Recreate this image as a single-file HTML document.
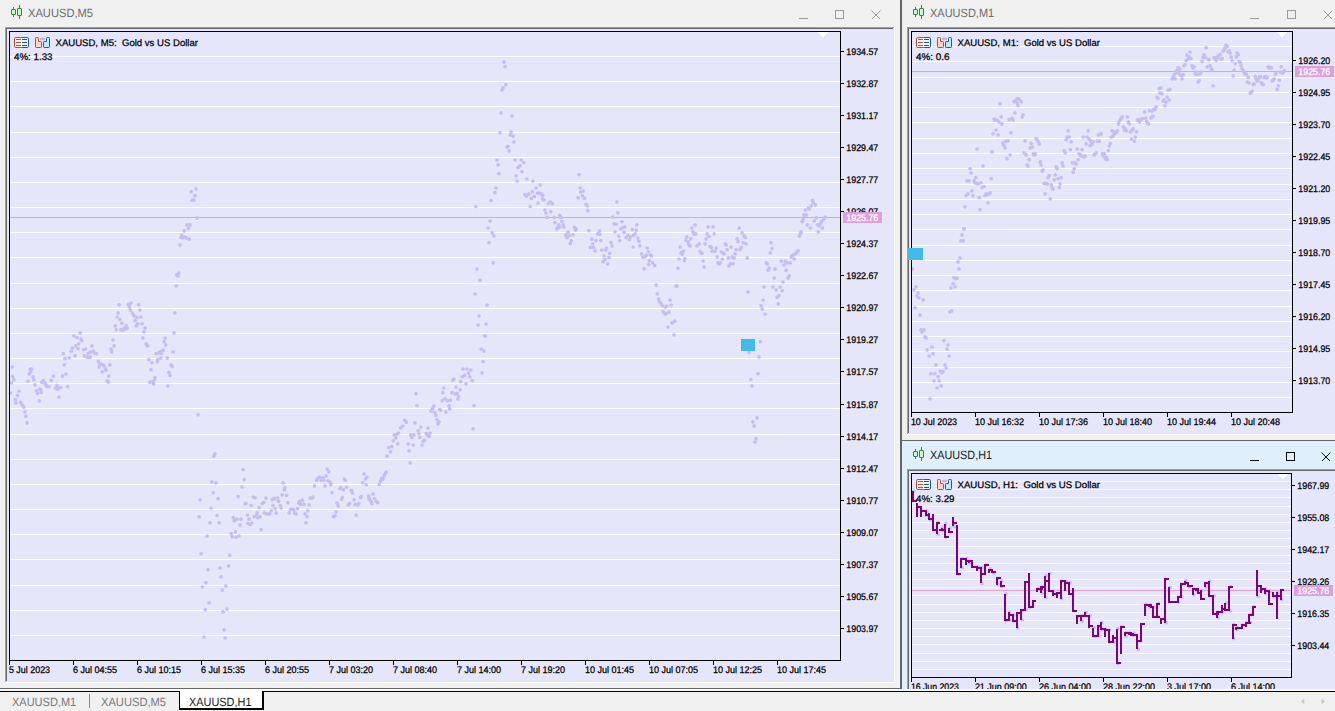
<!DOCTYPE html>
<html lang="en"><head><meta charset="utf-8"><title>XAUUSD charts</title>
<style>html,body{margin:0;padding:0;background:#F0F0F0;overflow:hidden}svg{display:block;font-family:"Liberation Sans", sans-serif}text{white-space:pre}</style></head><body>
<svg width="1335" height="711" viewBox="0 0 1335 711" shape-rendering="crispEdges" text-rendering="geometricPrecision">
<rect width="1335" height="711" fill="#F0F0F0"/>
<g id="win-m5">
<g transform="translate(11,5)" stroke="#22902F" fill="#CFF5D2" stroke-width="1" shape-rendering="geometricPrecision"><path d="M2.5 2V4.5M2.5 9.5V12M8.5 0V3.5M8.5 10.5V14" fill="none"/><rect x="0.5" y="4.5" width="4" height="5" rx="0.4"/><rect x="6.5" y="3.5" width="4" height="7" rx="0.4"/></g>
<text x="28" y="17.2" font-size="12" fill="#6D6D6D" text-anchor="start" textLength="65" lengthAdjust="spacingAndGlyphs">XAUUSD,M5</text>
<g stroke="#9A9A9A" stroke-width="1" fill="none"><path d="M799 18.5H808"/><rect x="835.5" y="10.5" width="8" height="8"/><path d="M871.5 10.5L880 19M880.5 10.5L872 19" shape-rendering="geometricPrecision"/></g>
<rect x="5" y="27" width="890" height="656" fill="#FFFFFF"/>
<rect x="5" y="27" width="889" height="655" fill="#A0A0A0"/>
<rect x="6" y="28" width="888" height="654" fill="#E3E3E3"/>
<rect x="6" y="28" width="887" height="653" fill="#696969"/>
<rect x="7" y="29" width="886" height="652" fill="#E6E6FA"/>
</g>
<g id="chart-m5">
<rect x="10" y="56" width="830" height="1" fill="#FFFFFF"/>
<rect x="10" y="81" width="830" height="1" fill="#FFFFFF"/>
<rect x="10" y="106" width="830" height="1" fill="#FFFFFF"/>
<rect x="10" y="132" width="830" height="1" fill="#FFFFFF"/>
<rect x="10" y="157" width="830" height="1" fill="#FFFFFF"/>
<rect x="10" y="182" width="830" height="1" fill="#FFFFFF"/>
<rect x="10" y="207" width="830" height="1" fill="#FFFFFF"/>
<rect x="10" y="232" width="830" height="1" fill="#FFFFFF"/>
<rect x="10" y="257" width="830" height="1" fill="#FFFFFF"/>
<rect x="10" y="283" width="830" height="1" fill="#FFFFFF"/>
<rect x="10" y="308" width="830" height="1" fill="#FFFFFF"/>
<rect x="10" y="333" width="830" height="1" fill="#FFFFFF"/>
<rect x="10" y="358" width="830" height="1" fill="#FFFFFF"/>
<rect x="10" y="383" width="830" height="1" fill="#FFFFFF"/>
<rect x="10" y="408" width="830" height="1" fill="#FFFFFF"/>
<rect x="10" y="434" width="830" height="1" fill="#FFFFFF"/>
<rect x="10" y="459" width="830" height="1" fill="#FFFFFF"/>
<rect x="10" y="484" width="830" height="1" fill="#FFFFFF"/>
<rect x="10" y="509" width="830" height="1" fill="#FFFFFF"/>
<rect x="10" y="534" width="830" height="1" fill="#FFFFFF"/>
<rect x="10" y="559" width="830" height="1" fill="#FFFFFF"/>
<rect x="10" y="585" width="830" height="1" fill="#FFFFFF"/>
<rect x="10" y="610" width="830" height="1" fill="#FFFFFF"/>
<rect x="10" y="635" width="830" height="1" fill="#FFFFFF"/>
<rect x="10" y="217" width="830" height="1" fill="#E0A2D2"/>
<g fill="#C7BEEF" shape-rendering="geometricPrecision"><circle cx="12.2" cy="367.0" r="1.85"/><circle cx="12.6" cy="376.5" r="1.85"/><circle cx="13.9" cy="379.7" r="1.85"/><circle cx="11.2" cy="382.8" r="1.85"/><circle cx="10.5" cy="393.0" r="1.85"/><circle cx="19.0" cy="391.3" r="1.85"/><circle cx="17.5" cy="395.5" r="1.85"/><circle cx="15.4" cy="399.7" r="1.85"/><circle cx="16.0" cy="402.9" r="1.85"/><circle cx="20.7" cy="402.4" r="1.85"/><circle cx="22.3" cy="405.0" r="1.85"/><circle cx="23.8" cy="407.1" r="1.85"/><circle cx="24.9" cy="411.9" r="1.85"/><circle cx="25.9" cy="416.2" r="1.85"/><circle cx="27.0" cy="422.9" r="1.85"/><circle cx="28.0" cy="381.1" r="1.85"/><circle cx="29.1" cy="374.0" r="1.85"/><circle cx="30.2" cy="369.1" r="1.85"/><circle cx="31.6" cy="369.1" r="1.85"/><circle cx="30.8" cy="371.9" r="1.85"/><circle cx="32.9" cy="376.9" r="1.85"/><circle cx="33.9" cy="379.7" r="1.85"/><circle cx="35.0" cy="384.9" r="1.85"/><circle cx="36.5" cy="390.8" r="1.85"/><circle cx="37.5" cy="393.4" r="1.85"/><circle cx="39.6" cy="389.2" r="1.85"/><circle cx="41.3" cy="392.3" r="1.85"/><circle cx="39.2" cy="400.8" r="1.85"/><circle cx="40.7" cy="389.6" r="1.85"/><circle cx="41.8" cy="382.2" r="1.85"/><circle cx="43.4" cy="380.7" r="1.85"/><circle cx="44.9" cy="382.8" r="1.85"/><circle cx="46.0" cy="384.9" r="1.85"/><circle cx="47.0" cy="386.6" r="1.85"/><circle cx="49.1" cy="386.6" r="1.85"/><circle cx="51.2" cy="380.3" r="1.85"/><circle cx="53.4" cy="376.1" r="1.85"/><circle cx="55.5" cy="388.1" r="1.85"/><circle cx="56.9" cy="385.4" r="1.85"/><circle cx="58.6" cy="388.1" r="1.85"/><circle cx="60.7" cy="387.5" r="1.85"/><circle cx="57.6" cy="389.2" r="1.85"/><circle cx="59.1" cy="397.0" r="1.85"/><circle cx="62.4" cy="375.9" r="1.85"/><circle cx="66.0" cy="374.0" r="1.85"/><circle cx="67.7" cy="386.6" r="1.85"/><circle cx="63.3" cy="353.7" r="1.85"/><circle cx="65.0" cy="358.6" r="1.85"/><circle cx="69.2" cy="357.9" r="1.85"/><circle cx="64.3" cy="364.9" r="1.85"/><circle cx="71.3" cy="351.2" r="1.85"/><circle cx="72.3" cy="348.0" r="1.85"/><circle cx="75.1" cy="355.8" r="1.85"/><circle cx="75.9" cy="345.9" r="1.85"/><circle cx="78.7" cy="343.8" r="1.85"/><circle cx="78.0" cy="348.6" r="1.85"/><circle cx="74.0" cy="335.8" r="1.85"/><circle cx="77.0" cy="337.5" r="1.85"/><circle cx="80.2" cy="332.8" r="1.85"/><circle cx="81.8" cy="340.6" r="1.85"/><circle cx="81.0" cy="339.2" r="1.85"/><circle cx="83.5" cy="349.7" r="1.85"/><circle cx="85.6" cy="349.1" r="1.85"/><circle cx="84.4" cy="355.8" r="1.85"/><circle cx="87.1" cy="357.1" r="1.85"/><circle cx="89.2" cy="357.5" r="1.85"/><circle cx="88.2" cy="353.3" r="1.85"/><circle cx="90.7" cy="352.2" r="1.85"/><circle cx="92.0" cy="345.9" r="1.85"/><circle cx="93.4" cy="351.2" r="1.85"/><circle cx="94.9" cy="353.3" r="1.85"/><circle cx="96.6" cy="353.7" r="1.85"/><circle cx="90.3" cy="357.1" r="1.85"/><circle cx="98.3" cy="361.1" r="1.85"/><circle cx="99.8" cy="363.8" r="1.85"/><circle cx="99.1" cy="367.0" r="1.85"/><circle cx="101.9" cy="364.3" r="1.85"/><circle cx="104.0" cy="365.9" r="1.85"/><circle cx="102.3" cy="371.9" r="1.85"/><circle cx="105.5" cy="369.1" r="1.85"/><circle cx="106.1" cy="370.2" r="1.85"/><circle cx="109.9" cy="364.9" r="1.85"/><circle cx="108.8" cy="376.1" r="1.85"/><circle cx="107.2" cy="381.1" r="1.85"/><circle cx="108.2" cy="382.2" r="1.85"/><circle cx="112.9" cy="340.0" r="1.85"/><circle cx="114.1" cy="345.9" r="1.85"/><circle cx="111.0" cy="349.1" r="1.85"/><circle cx="111.8" cy="351.8" r="1.85"/><circle cx="119.2" cy="304.8" r="1.85"/><circle cx="118.1" cy="312.8" r="1.85"/><circle cx="117.1" cy="317.0" r="1.85"/><circle cx="119.8" cy="319.5" r="1.85"/><circle cx="121.9" cy="323.3" r="1.85"/><circle cx="115.2" cy="325.9" r="1.85"/><circle cx="116.2" cy="329.7" r="1.85"/><circle cx="120.9" cy="329.7" r="1.85"/><circle cx="123.0" cy="330.1" r="1.85"/><circle cx="125.1" cy="329.0" r="1.85"/><circle cx="126.1" cy="325.9" r="1.85"/><circle cx="127.2" cy="328.0" r="1.85"/><circle cx="124.0" cy="328.0" r="1.85"/><circle cx="128.3" cy="304.3" r="1.85"/><circle cx="131.0" cy="303.1" r="1.85"/><circle cx="129.3" cy="306.9" r="1.85"/><circle cx="130.4" cy="310.0" r="1.85"/><circle cx="132.5" cy="313.2" r="1.85"/><circle cx="133.9" cy="315.7" r="1.85"/><circle cx="136.7" cy="317.4" r="1.85"/><circle cx="135.2" cy="320.6" r="1.85"/><circle cx="137.7" cy="323.8" r="1.85"/><circle cx="136.3" cy="325.9" r="1.85"/><circle cx="138.8" cy="304.8" r="1.85"/><circle cx="139.9" cy="310.0" r="1.85"/><circle cx="140.9" cy="317.0" r="1.85"/><circle cx="142.0" cy="323.8" r="1.85"/><circle cx="145.1" cy="328.0" r="1.85"/><circle cx="144.1" cy="331.8" r="1.85"/><circle cx="143.0" cy="337.9" r="1.85"/><circle cx="146.2" cy="343.8" r="1.85"/><circle cx="147.7" cy="345.9" r="1.85"/><circle cx="146.8" cy="344.9" r="1.85"/><circle cx="148.9" cy="359.6" r="1.85"/><circle cx="151.9" cy="362.8" r="1.85"/><circle cx="151.0" cy="369.7" r="1.85"/><circle cx="149.8" cy="382.2" r="1.85"/><circle cx="152.5" cy="381.8" r="1.85"/><circle cx="153.6" cy="383.9" r="1.85"/><circle cx="154.6" cy="379.7" r="1.85"/><circle cx="155.0" cy="377.6" r="1.85"/><circle cx="156.1" cy="353.7" r="1.85"/><circle cx="158.8" cy="352.9" r="1.85"/><circle cx="160.3" cy="351.6" r="1.85"/><circle cx="161.6" cy="353.3" r="1.85"/><circle cx="163.1" cy="350.1" r="1.85"/><circle cx="161.0" cy="357.9" r="1.85"/><circle cx="157.8" cy="359.6" r="1.85"/><circle cx="157.4" cy="361.7" r="1.85"/><circle cx="165.2" cy="338.1" r="1.85"/><circle cx="164.1" cy="341.7" r="1.85"/><circle cx="165.8" cy="344.9" r="1.85"/><circle cx="167.3" cy="357.9" r="1.85"/><circle cx="171.1" cy="364.9" r="1.85"/><circle cx="172.1" cy="366.4" r="1.85"/><circle cx="168.8" cy="372.3" r="1.85"/><circle cx="170.0" cy="375.4" r="1.85"/><circle cx="167.9" cy="386.0" r="1.85"/><circle cx="173.2" cy="351.8" r="1.85"/><circle cx="174.0" cy="332.8" r="1.85"/><circle cx="174.9" cy="312.8" r="1.85"/><circle cx="196.0" cy="189.0" r="1.85"/><circle cx="191.2" cy="191.7" r="1.85"/><circle cx="195.0" cy="195.7" r="1.85"/><circle cx="193.9" cy="200.0" r="1.85"/><circle cx="192.2" cy="200.2" r="1.85"/><circle cx="197.1" cy="217.9" r="1.85"/><circle cx="187.0" cy="224.9" r="1.85"/><circle cx="190.1" cy="224.9" r="1.85"/><circle cx="188.4" cy="228.6" r="1.85"/><circle cx="184.2" cy="230.8" r="1.85"/><circle cx="181.7" cy="235.0" r="1.85"/><circle cx="181.1" cy="237.5" r="1.85"/><circle cx="182.7" cy="237.9" r="1.85"/><circle cx="184.9" cy="237.1" r="1.85"/><circle cx="186.5" cy="237.9" r="1.85"/><circle cx="189.3" cy="239.0" r="1.85"/><circle cx="180.0" cy="244.9" r="1.85"/><circle cx="178.9" cy="273.0" r="1.85"/><circle cx="176.8" cy="274.9" r="1.85"/><circle cx="178.1" cy="275.9" r="1.85"/><circle cx="176.2" cy="286.0" r="1.85"/><circle cx="198.0" cy="414.8" r="1.85"/><circle cx="214.9" cy="453.8" r="1.85"/><circle cx="213.8" cy="455.9" r="1.85"/><circle cx="200.1" cy="499.8" r="1.85"/><circle cx="199.1" cy="516.7" r="1.85"/><circle cx="211.7" cy="481.9" r="1.85"/><circle cx="215.9" cy="482.9" r="1.85"/><circle cx="213.2" cy="492.8" r="1.85"/><circle cx="218.1" cy="498.7" r="1.85"/><circle cx="211.1" cy="508.0" r="1.85"/><circle cx="217.0" cy="515.6" r="1.85"/><circle cx="210.0" cy="522.8" r="1.85"/><circle cx="219.1" cy="522.8" r="1.85"/><circle cx="207.1" cy="536.1" r="1.85"/><circle cx="243.2" cy="469.6" r="1.85"/><circle cx="244.2" cy="479.7" r="1.85"/><circle cx="242.1" cy="486.9" r="1.85"/><circle cx="238.1" cy="496.6" r="1.85"/><circle cx="233.2" cy="517.7" r="1.85"/><circle cx="234.3" cy="520.7" r="1.85"/><circle cx="236.8" cy="519.2" r="1.85"/><circle cx="241.1" cy="519.2" r="1.85"/><circle cx="240.2" cy="525.1" r="1.85"/><circle cx="231.1" cy="533.5" r="1.85"/><circle cx="235.4" cy="531.9" r="1.85"/><circle cx="232.2" cy="536.7" r="1.85"/><circle cx="236.0" cy="537.1" r="1.85"/><circle cx="238.9" cy="536.1" r="1.85"/><circle cx="245.9" cy="503.4" r="1.85"/><circle cx="245.3" cy="503.8" r="1.85"/><circle cx="251.2" cy="505.5" r="1.85"/><circle cx="253.3" cy="497.0" r="1.85"/><circle cx="255.0" cy="497.7" r="1.85"/><circle cx="247.4" cy="515.0" r="1.85"/><circle cx="249.1" cy="519.2" r="1.85"/><circle cx="248.0" cy="523.4" r="1.85"/><circle cx="250.1" cy="524.5" r="1.85"/><circle cx="251.8" cy="523.0" r="1.85"/><circle cx="254.3" cy="516.7" r="1.85"/><circle cx="256.5" cy="515.0" r="1.85"/><circle cx="257.1" cy="512.9" r="1.85"/><circle cx="257.9" cy="517.7" r="1.85"/><circle cx="260.0" cy="516.7" r="1.85"/><circle cx="259.2" cy="507.6" r="1.85"/><circle cx="261.1" cy="529.7" r="1.85"/><circle cx="262.4" cy="503.4" r="1.85"/><circle cx="263.8" cy="502.3" r="1.85"/><circle cx="265.9" cy="498.1" r="1.85"/><circle cx="264.3" cy="512.9" r="1.85"/><circle cx="267.0" cy="513.9" r="1.85"/><circle cx="269.7" cy="513.9" r="1.85"/><circle cx="271.2" cy="510.8" r="1.85"/><circle cx="272.3" cy="499.6" r="1.85"/><circle cx="272.9" cy="505.5" r="1.85"/><circle cx="274.4" cy="498.7" r="1.85"/><circle cx="275.0" cy="508.6" r="1.85"/><circle cx="276.1" cy="512.9" r="1.85"/><circle cx="277.6" cy="498.1" r="1.85"/><circle cx="278.6" cy="501.3" r="1.85"/><circle cx="280.3" cy="505.5" r="1.85"/><circle cx="281.1" cy="508.0" r="1.85"/><circle cx="282.2" cy="494.9" r="1.85"/><circle cx="283.0" cy="482.9" r="1.85"/><circle cx="284.9" cy="487.6" r="1.85"/><circle cx="284.3" cy="489.7" r="1.85"/><circle cx="286.6" cy="495.4" r="1.85"/><circle cx="287.9" cy="502.7" r="1.85"/><circle cx="289.2" cy="512.9" r="1.85"/><circle cx="290.6" cy="509.3" r="1.85"/><circle cx="292.3" cy="509.3" r="1.85"/><circle cx="293.8" cy="509.7" r="1.85"/><circle cx="294.6" cy="512.9" r="1.85"/><circle cx="296.1" cy="513.9" r="1.85"/><circle cx="297.6" cy="508.6" r="1.85"/><circle cx="298.6" cy="503.0" r="1.85"/><circle cx="299.7" cy="501.3" r="1.85"/><circle cx="300.8" cy="504.4" r="1.85"/><circle cx="302.4" cy="500.2" r="1.85"/><circle cx="303.9" cy="504.4" r="1.85"/><circle cx="305.0" cy="513.9" r="1.85"/><circle cx="307.1" cy="516.7" r="1.85"/><circle cx="307.7" cy="510.8" r="1.85"/><circle cx="306.0" cy="522.8" r="1.85"/><circle cx="309.2" cy="504.9" r="1.85"/><circle cx="310.3" cy="498.1" r="1.85"/><circle cx="311.7" cy="498.1" r="1.85"/><circle cx="313.0" cy="497.0" r="1.85"/><circle cx="314.5" cy="485.9" r="1.85"/><circle cx="316.6" cy="480.2" r="1.85"/><circle cx="318.1" cy="478.1" r="1.85"/><circle cx="319.7" cy="477.0" r="1.85"/><circle cx="321.2" cy="480.2" r="1.85"/><circle cx="322.9" cy="477.6" r="1.85"/><circle cx="324.0" cy="480.2" r="1.85"/><circle cx="325.0" cy="485.9" r="1.85"/><circle cx="326.1" cy="475.9" r="1.85"/><circle cx="327.1" cy="469.0" r="1.85"/><circle cx="328.8" cy="471.7" r="1.85"/><circle cx="328.2" cy="480.8" r="1.85"/><circle cx="330.3" cy="482.3" r="1.85"/><circle cx="330.9" cy="484.8" r="1.85"/><circle cx="332.0" cy="492.8" r="1.85"/><circle cx="333.5" cy="516.7" r="1.85"/><circle cx="335.1" cy="515.6" r="1.85"/><circle cx="336.0" cy="511.8" r="1.85"/><circle cx="337.0" cy="503.0" r="1.85"/><circle cx="338.1" cy="505.9" r="1.85"/><circle cx="339.8" cy="488.6" r="1.85"/><circle cx="340.8" cy="487.6" r="1.85"/><circle cx="341.5" cy="499.2" r="1.85"/><circle cx="342.3" cy="497.5" r="1.85"/><circle cx="343.4" cy="489.7" r="1.85"/><circle cx="344.4" cy="479.1" r="1.85"/><circle cx="345.1" cy="480.2" r="1.85"/><circle cx="346.5" cy="487.1" r="1.85"/><circle cx="348.2" cy="504.9" r="1.85"/><circle cx="349.7" cy="503.4" r="1.85"/><circle cx="351.4" cy="490.3" r="1.85"/><circle cx="352.4" cy="492.8" r="1.85"/><circle cx="354.1" cy="499.8" r="1.85"/><circle cx="355.2" cy="504.4" r="1.85"/><circle cx="356.2" cy="515.0" r="1.85"/><circle cx="357.7" cy="504.9" r="1.85"/><circle cx="358.8" cy="503.4" r="1.85"/><circle cx="360.5" cy="497.5" r="1.85"/><circle cx="361.3" cy="496.6" r="1.85"/><circle cx="362.6" cy="482.7" r="1.85"/><circle cx="364.1" cy="473.8" r="1.85"/><circle cx="365.5" cy="479.1" r="1.85"/><circle cx="366.8" cy="477.0" r="1.85"/><circle cx="366.2" cy="484.8" r="1.85"/><circle cx="368.7" cy="496.0" r="1.85"/><circle cx="369.7" cy="499.2" r="1.85"/><circle cx="371.0" cy="501.3" r="1.85"/><circle cx="371.9" cy="503.4" r="1.85"/><circle cx="373.1" cy="493.9" r="1.85"/><circle cx="374.6" cy="498.7" r="1.85"/><circle cx="376.3" cy="501.3" r="1.85"/><circle cx="377.8" cy="502.7" r="1.85"/><circle cx="368.9" cy="498.1" r="1.85"/><circle cx="379.2" cy="484.4" r="1.85"/><circle cx="380.5" cy="481.2" r="1.85"/><circle cx="381.6" cy="478.5" r="1.85"/><circle cx="383.0" cy="479.1" r="1.85"/><circle cx="384.1" cy="475.9" r="1.85"/><circle cx="385.1" cy="473.8" r="1.85"/><circle cx="386.2" cy="472.2" r="1.85"/><circle cx="201.1" cy="553.8" r="1.85"/><circle cx="208.0" cy="569.7" r="1.85"/><circle cx="205.9" cy="582.7" r="1.85"/><circle cx="202.3" cy="587.0" r="1.85"/><circle cx="209.1" cy="602.8" r="1.85"/><circle cx="205.3" cy="609.7" r="1.85"/><circle cx="204.0" cy="637.0" r="1.85"/><circle cx="229.7" cy="555.3" r="1.85"/><circle cx="228.5" cy="565.9" r="1.85"/><circle cx="220.0" cy="568.0" r="1.85"/><circle cx="221.1" cy="576.8" r="1.85"/><circle cx="225.9" cy="585.9" r="1.85"/><circle cx="222.2" cy="590.1" r="1.85"/><circle cx="227.0" cy="609.1" r="1.85"/><circle cx="223.0" cy="611.9" r="1.85"/><circle cx="224.1" cy="629.8" r="1.85"/><circle cx="225.1" cy="638.0" r="1.85"/><circle cx="485.0" cy="335.9" r="1.85"/><circle cx="481.2" cy="349.0" r="1.85"/><circle cx="483.9" cy="351.1" r="1.85"/><circle cx="483.1" cy="361.6" r="1.85"/><circle cx="482.0" cy="372.8" r="1.85"/><circle cx="474.0" cy="405.5" r="1.85"/><circle cx="473.0" cy="428.7" r="1.85"/><circle cx="463.0" cy="369.0" r="1.85"/><circle cx="467.0" cy="369.0" r="1.85"/><circle cx="470.8" cy="370.1" r="1.85"/><circle cx="468.5" cy="373.2" r="1.85"/><circle cx="464.5" cy="375.4" r="1.85"/><circle cx="462.2" cy="376.8" r="1.85"/><circle cx="469.8" cy="376.8" r="1.85"/><circle cx="472.3" cy="380.6" r="1.85"/><circle cx="460.7" cy="381.7" r="1.85"/><circle cx="466.0" cy="383.8" r="1.85"/><circle cx="453.8" cy="379.2" r="1.85"/><circle cx="452.9" cy="380.2" r="1.85"/><circle cx="456.1" cy="387.0" r="1.85"/><circle cx="460.1" cy="389.7" r="1.85"/><circle cx="443.8" cy="388.0" r="1.85"/><circle cx="442.8" cy="392.7" r="1.85"/><circle cx="451.9" cy="392.7" r="1.85"/><circle cx="455.0" cy="393.9" r="1.85"/><circle cx="457.1" cy="393.3" r="1.85"/><circle cx="458.6" cy="396.5" r="1.85"/><circle cx="458.0" cy="399.0" r="1.85"/><circle cx="444.9" cy="398.6" r="1.85"/><circle cx="442.4" cy="400.7" r="1.85"/><circle cx="447.4" cy="400.7" r="1.85"/><circle cx="450.6" cy="400.0" r="1.85"/><circle cx="449.1" cy="405.9" r="1.85"/><circle cx="449.7" cy="409.1" r="1.85"/><circle cx="445.9" cy="411.9" r="1.85"/><circle cx="440.7" cy="410.2" r="1.85"/><circle cx="439.6" cy="409.7" r="1.85"/><circle cx="433.9" cy="405.9" r="1.85"/><circle cx="432.7" cy="408.5" r="1.85"/><circle cx="431.2" cy="410.8" r="1.85"/><circle cx="434.8" cy="412.3" r="1.85"/><circle cx="435.8" cy="415.4" r="1.85"/><circle cx="437.1" cy="419.7" r="1.85"/><circle cx="439.0" cy="421.8" r="1.85"/><circle cx="437.9" cy="423.9" r="1.85"/><circle cx="416.0" cy="393.7" r="1.85"/><circle cx="417.0" cy="405.5" r="1.85"/><circle cx="404.8" cy="420.3" r="1.85"/><circle cx="406.3" cy="422.2" r="1.85"/><circle cx="402.7" cy="426.0" r="1.85"/><circle cx="400.6" cy="428.1" r="1.85"/><circle cx="414.9" cy="422.8" r="1.85"/><circle cx="420.8" cy="427.0" r="1.85"/><circle cx="428.0" cy="428.1" r="1.85"/><circle cx="418.1" cy="430.8" r="1.85"/><circle cx="418.9" cy="433.8" r="1.85"/><circle cx="426.3" cy="433.4" r="1.85"/><circle cx="430.1" cy="433.0" r="1.85"/><circle cx="427.4" cy="434.9" r="1.85"/><circle cx="429.1" cy="436.5" r="1.85"/><circle cx="420.0" cy="437.6" r="1.85"/><circle cx="424.4" cy="440.1" r="1.85"/><circle cx="423.4" cy="441.2" r="1.85"/><circle cx="422.1" cy="445.0" r="1.85"/><circle cx="410.7" cy="434.9" r="1.85"/><circle cx="413.9" cy="434.9" r="1.85"/><circle cx="411.8" cy="437.6" r="1.85"/><circle cx="408.2" cy="443.9" r="1.85"/><circle cx="413.2" cy="445.0" r="1.85"/><circle cx="409.0" cy="450.9" r="1.85"/><circle cx="410.1" cy="462.9" r="1.85"/><circle cx="398.5" cy="433.0" r="1.85"/><circle cx="396.4" cy="434.4" r="1.85"/><circle cx="394.3" cy="434.9" r="1.85"/><circle cx="395.7" cy="438.0" r="1.85"/><circle cx="393.2" cy="440.8" r="1.85"/><circle cx="397.8" cy="443.9" r="1.85"/><circle cx="391.7" cy="446.7" r="1.85"/><circle cx="388.6" cy="447.5" r="1.85"/><circle cx="390.5" cy="451.7" r="1.85"/><circle cx="387.1" cy="455.9" r="1.85"/><circle cx="494.9" cy="192.7" r="1.85"/><circle cx="491.1" cy="200.5" r="1.85"/><circle cx="475.9" cy="206.5" r="1.85"/><circle cx="490.1" cy="221.0" r="1.85"/><circle cx="488.2" cy="228.0" r="1.85"/><circle cx="492.2" cy="232.8" r="1.85"/><circle cx="493.9" cy="235.8" r="1.85"/><circle cx="489.0" cy="242.7" r="1.85"/><circle cx="493.2" cy="262.8" r="1.85"/><circle cx="477.0" cy="269.1" r="1.85"/><circle cx="480.0" cy="280.1" r="1.85"/><circle cx="475.1" cy="294.0" r="1.85"/><circle cx="487.1" cy="305.0" r="1.85"/><circle cx="479.1" cy="315.9" r="1.85"/><circle cx="478.1" cy="325.0" r="1.85"/><circle cx="486.1" cy="324.0" r="1.85"/><circle cx="485.0" cy="336.0" r="1.85"/><circle cx="524.9" cy="194.6" r="1.85"/><circle cx="526.6" cy="195.9" r="1.85"/><circle cx="528.7" cy="194.2" r="1.85"/><circle cx="532.3" cy="191.7" r="1.85"/><circle cx="531.2" cy="198.4" r="1.85"/><circle cx="534.4" cy="196.3" r="1.85"/><circle cx="537.6" cy="193.2" r="1.85"/><circle cx="539.7" cy="193.2" r="1.85"/><circle cx="541.8" cy="194.2" r="1.85"/><circle cx="542.8" cy="195.3" r="1.85"/><circle cx="542.4" cy="198.9" r="1.85"/><circle cx="543.9" cy="199.9" r="1.85"/><circle cx="538.0" cy="203.1" r="1.85"/><circle cx="530.2" cy="206.5" r="1.85"/><circle cx="548.1" cy="203.7" r="1.85"/><circle cx="550.2" cy="202.0" r="1.85"/><circle cx="552.3" cy="203.7" r="1.85"/><circle cx="544.9" cy="210.0" r="1.85"/><circle cx="546.0" cy="212.8" r="1.85"/><circle cx="550.8" cy="211.7" r="1.85"/><circle cx="547.0" cy="217.4" r="1.85"/><circle cx="554.0" cy="217.4" r="1.85"/><circle cx="554.9" cy="222.7" r="1.85"/><circle cx="559.7" cy="215.3" r="1.85"/><circle cx="560.8" cy="217.4" r="1.85"/><circle cx="561.8" cy="221.6" r="1.85"/><circle cx="558.6" cy="224.8" r="1.85"/><circle cx="559.7" cy="226.9" r="1.85"/><circle cx="556.5" cy="229.0" r="1.85"/><circle cx="557.6" cy="228.0" r="1.85"/><circle cx="563.3" cy="224.8" r="1.85"/><circle cx="563.9" cy="226.9" r="1.85"/><circle cx="565.6" cy="234.9" r="1.85"/><circle cx="567.1" cy="237.5" r="1.85"/><circle cx="568.1" cy="232.2" r="1.85"/><circle cx="569.2" cy="235.4" r="1.85"/><circle cx="571.3" cy="240.6" r="1.85"/><circle cx="570.3" cy="243.4" r="1.85"/><circle cx="573.0" cy="234.9" r="1.85"/><circle cx="574.5" cy="227.3" r="1.85"/><circle cx="576.2" cy="229.0" r="1.85"/><circle cx="575.5" cy="230.1" r="1.85"/><circle cx="578.1" cy="197.8" r="1.85"/><circle cx="580.8" cy="192.1" r="1.85"/><circle cx="583.3" cy="191.1" r="1.85"/><circle cx="582.5" cy="195.9" r="1.85"/><circle cx="584.6" cy="198.4" r="1.85"/><circle cx="586.1" cy="204.3" r="1.85"/><circle cx="587.1" cy="205.8" r="1.85"/><circle cx="587.8" cy="210.7" r="1.85"/><circle cx="588.8" cy="230.7" r="1.85"/><circle cx="591.8" cy="239.2" r="1.85"/><circle cx="592.8" cy="243.8" r="1.85"/><circle cx="590.3" cy="247.4" r="1.85"/><circle cx="593.5" cy="247.4" r="1.85"/><circle cx="595.1" cy="250.8" r="1.85"/><circle cx="596.0" cy="240.6" r="1.85"/><circle cx="597.7" cy="233.9" r="1.85"/><circle cx="599.4" cy="231.1" r="1.85"/><circle cx="599.8" cy="234.3" r="1.85"/><circle cx="600.8" cy="240.6" r="1.85"/><circle cx="601.9" cy="250.1" r="1.85"/><circle cx="606.5" cy="248.0" r="1.85"/><circle cx="605.7" cy="250.1" r="1.85"/><circle cx="609.7" cy="253.3" r="1.85"/><circle cx="608.9" cy="257.5" r="1.85"/><circle cx="604.0" cy="256.0" r="1.85"/><circle cx="605.1" cy="259.6" r="1.85"/><circle cx="603.0" cy="261.7" r="1.85"/><circle cx="607.8" cy="263.8" r="1.85"/><circle cx="611.0" cy="242.3" r="1.85"/><circle cx="612.0" cy="245.9" r="1.85"/><circle cx="612.9" cy="217.0" r="1.85"/><circle cx="616.9" cy="202.0" r="1.85"/><circle cx="617.9" cy="212.8" r="1.85"/><circle cx="614.1" cy="223.8" r="1.85"/><circle cx="616.0" cy="224.2" r="1.85"/><circle cx="615.0" cy="231.8" r="1.85"/><circle cx="621.9" cy="221.6" r="1.85"/><circle cx="623.0" cy="227.6" r="1.85"/><circle cx="624.7" cy="226.9" r="1.85"/><circle cx="620.9" cy="229.0" r="1.85"/><circle cx="618.8" cy="236.0" r="1.85"/><circle cx="619.8" cy="240.6" r="1.85"/><circle cx="624.1" cy="232.2" r="1.85"/><circle cx="626.2" cy="237.5" r="1.85"/><circle cx="627.8" cy="235.4" r="1.85"/><circle cx="629.3" cy="239.6" r="1.85"/><circle cx="630.4" cy="236.8" r="1.85"/><circle cx="632.5" cy="229.5" r="1.85"/><circle cx="633.5" cy="235.4" r="1.85"/><circle cx="635.2" cy="233.9" r="1.85"/><circle cx="636.3" cy="230.1" r="1.85"/><circle cx="636.9" cy="224.8" r="1.85"/><circle cx="633.1" cy="247.0" r="1.85"/><circle cx="637.8" cy="238.1" r="1.85"/><circle cx="638.8" cy="241.3" r="1.85"/><circle cx="639.9" cy="245.9" r="1.85"/><circle cx="641.6" cy="253.9" r="1.85"/><circle cx="643.0" cy="257.1" r="1.85"/><circle cx="645.1" cy="256.5" r="1.85"/><circle cx="646.2" cy="255.4" r="1.85"/><circle cx="647.3" cy="248.0" r="1.85"/><circle cx="648.3" cy="251.8" r="1.85"/><circle cx="644.1" cy="268.7" r="1.85"/><circle cx="648.7" cy="264.3" r="1.85"/><circle cx="649.4" cy="260.7" r="1.85"/><circle cx="504.0" cy="61.9" r="1.85"/><circle cx="505.1" cy="66.7" r="1.85"/><circle cx="505.9" cy="84.7" r="1.85"/><circle cx="503.0" cy="87.8" r="1.85"/><circle cx="501.9" cy="89.9" r="1.85"/><circle cx="501.1" cy="112.9" r="1.85"/><circle cx="512.0" cy="115.9" r="1.85"/><circle cx="500.0" cy="132.8" r="1.85"/><circle cx="511.0" cy="131.9" r="1.85"/><circle cx="510.1" cy="135.1" r="1.85"/><circle cx="513.1" cy="136.1" r="1.85"/><circle cx="513.9" cy="142.0" r="1.85"/><circle cx="508.0" cy="146.3" r="1.85"/><circle cx="507.0" cy="147.1" r="1.85"/><circle cx="509.1" cy="150.9" r="1.85"/><circle cx="497.0" cy="160.0" r="1.85"/><circle cx="498.1" cy="164.8" r="1.85"/><circle cx="498.9" cy="173.7" r="1.85"/><circle cx="515.0" cy="160.0" r="1.85"/><circle cx="521.1" cy="160.0" r="1.85"/><circle cx="523.8" cy="162.7" r="1.85"/><circle cx="520.0" cy="165.9" r="1.85"/><circle cx="518.1" cy="167.4" r="1.85"/><circle cx="521.9" cy="171.6" r="1.85"/><circle cx="516.0" cy="175.8" r="1.85"/><circle cx="517.1" cy="181.1" r="1.85"/><circle cx="527.0" cy="179.0" r="1.85"/><circle cx="532.9" cy="181.1" r="1.85"/><circle cx="540.1" cy="184.9" r="1.85"/><circle cx="536.1" cy="188.0" r="1.85"/><circle cx="496.0" cy="188.0" r="1.85"/><circle cx="579.1" cy="174.7" r="1.85"/><circle cx="580.2" cy="188.0" r="1.85"/><circle cx="650.5" cy="255.0" r="1.85"/><circle cx="651.6" cy="256.0" r="1.85"/><circle cx="652.7" cy="262.8" r="1.85"/><circle cx="654.8" cy="265.5" r="1.85"/><circle cx="656.2" cy="284.9" r="1.85"/><circle cx="657.3" cy="293.8" r="1.85"/><circle cx="658.6" cy="299.1" r="1.85"/><circle cx="659.6" cy="301.8" r="1.85"/><circle cx="661.1" cy="303.9" r="1.85"/><circle cx="662.2" cy="305.6" r="1.85"/><circle cx="663.2" cy="311.7" r="1.85"/><circle cx="665.3" cy="307.1" r="1.85"/><circle cx="667.0" cy="306.0" r="1.85"/><circle cx="664.9" cy="314.1" r="1.85"/><circle cx="666.4" cy="313.4" r="1.85"/><circle cx="669.1" cy="311.9" r="1.85"/><circle cx="670.0" cy="300.1" r="1.85"/><circle cx="671.0" cy="305.0" r="1.85"/><circle cx="668.1" cy="327.1" r="1.85"/><circle cx="672.1" cy="322.9" r="1.85"/><circle cx="674.8" cy="321.2" r="1.85"/><circle cx="674.0" cy="334.9" r="1.85"/><circle cx="675.9" cy="286.0" r="1.85"/><circle cx="677.1" cy="286.0" r="1.85"/><circle cx="678.0" cy="268.1" r="1.85"/><circle cx="679.0" cy="259.0" r="1.85"/><circle cx="680.1" cy="247.0" r="1.85"/><circle cx="681.1" cy="252.9" r="1.85"/><circle cx="682.2" cy="254.3" r="1.85"/><circle cx="683.2" cy="251.2" r="1.85"/><circle cx="684.3" cy="260.7" r="1.85"/><circle cx="684.9" cy="258.6" r="1.85"/><circle cx="686.0" cy="240.2" r="1.85"/><circle cx="686.8" cy="236.8" r="1.85"/><circle cx="688.1" cy="241.7" r="1.85"/><circle cx="688.9" cy="244.4" r="1.85"/><circle cx="690.0" cy="245.9" r="1.85"/><circle cx="690.8" cy="238.9" r="1.85"/><circle cx="691.9" cy="228.0" r="1.85"/><circle cx="693.0" cy="231.8" r="1.85"/><circle cx="694.0" cy="234.3" r="1.85"/><circle cx="695.1" cy="224.8" r="1.85"/><circle cx="695.9" cy="233.9" r="1.85"/><circle cx="697.0" cy="245.9" r="1.85"/><circle cx="699.1" cy="243.8" r="1.85"/><circle cx="700.1" cy="251.2" r="1.85"/><circle cx="701.2" cy="252.9" r="1.85"/><circle cx="702.0" cy="253.3" r="1.85"/><circle cx="703.1" cy="261.1" r="1.85"/><circle cx="704.1" cy="267.0" r="1.85"/><circle cx="705.0" cy="243.8" r="1.85"/><circle cx="706.0" cy="238.9" r="1.85"/><circle cx="707.1" cy="233.9" r="1.85"/><circle cx="708.1" cy="226.9" r="1.85"/><circle cx="709.0" cy="236.4" r="1.85"/><circle cx="710.0" cy="246.5" r="1.85"/><circle cx="711.3" cy="247.4" r="1.85"/><circle cx="712.2" cy="251.2" r="1.85"/><circle cx="713.0" cy="226.9" r="1.85"/><circle cx="714.1" cy="233.9" r="1.85"/><circle cx="715.1" cy="251.2" r="1.85"/><circle cx="716.2" cy="248.0" r="1.85"/><circle cx="717.2" cy="256.9" r="1.85"/><circle cx="718.1" cy="262.8" r="1.85"/><circle cx="719.1" cy="263.8" r="1.85"/><circle cx="720.2" cy="262.8" r="1.85"/><circle cx="721.2" cy="251.8" r="1.85"/><circle cx="722.3" cy="259.0" r="1.85"/><circle cx="722.9" cy="252.9" r="1.85"/><circle cx="724.0" cy="253.9" r="1.85"/><circle cx="725.4" cy="243.8" r="1.85"/><circle cx="726.1" cy="244.9" r="1.85"/><circle cx="727.1" cy="249.7" r="1.85"/><circle cx="728.2" cy="257.9" r="1.85"/><circle cx="729.0" cy="265.9" r="1.85"/><circle cx="730.3" cy="263.8" r="1.85"/><circle cx="731.1" cy="247.0" r="1.85"/><circle cx="732.2" cy="257.1" r="1.85"/><circle cx="733.0" cy="263.8" r="1.85"/><circle cx="734.1" cy="257.9" r="1.85"/><circle cx="735.1" cy="253.9" r="1.85"/><circle cx="736.2" cy="249.7" r="1.85"/><circle cx="737.0" cy="238.9" r="1.85"/><circle cx="738.1" cy="241.7" r="1.85"/><circle cx="739.2" cy="228.0" r="1.85"/><circle cx="740.2" cy="249.7" r="1.85"/><circle cx="741.3" cy="247.4" r="1.85"/><circle cx="742.1" cy="232.8" r="1.85"/><circle cx="743.2" cy="242.7" r="1.85"/><circle cx="744.2" cy="236.0" r="1.85"/><circle cx="745.3" cy="237.5" r="1.85"/><circle cx="746.1" cy="243.8" r="1.85"/><circle cx="747.2" cy="257.9" r="1.85"/><circle cx="748.0" cy="291.9" r="1.85"/><circle cx="761.1" cy="305.6" r="1.85"/><circle cx="762.2" cy="309.2" r="1.85"/><circle cx="763.2" cy="300.1" r="1.85"/><circle cx="764.1" cy="287.0" r="1.85"/><circle cx="765.1" cy="314.1" r="1.85"/><circle cx="766.2" cy="262.8" r="1.85"/><circle cx="767.2" cy="263.8" r="1.85"/><circle cx="768.1" cy="270.2" r="1.85"/><circle cx="769.1" cy="268.1" r="1.85"/><circle cx="770.2" cy="252.9" r="1.85"/><circle cx="771.0" cy="242.7" r="1.85"/><circle cx="772.1" cy="248.6" r="1.85"/><circle cx="773.1" cy="287.0" r="1.85"/><circle cx="774.2" cy="278.0" r="1.85"/><circle cx="775.0" cy="269.1" r="1.85"/><circle cx="776.1" cy="289.8" r="1.85"/><circle cx="777.1" cy="297.2" r="1.85"/><circle cx="778.2" cy="303.9" r="1.85"/><circle cx="779.0" cy="295.5" r="1.85"/><circle cx="780.1" cy="287.0" r="1.85"/><circle cx="781.1" cy="261.1" r="1.85"/><circle cx="782.2" cy="290.8" r="1.85"/><circle cx="783.0" cy="282.0" r="1.85"/><circle cx="784.1" cy="264.9" r="1.85"/><circle cx="785.1" cy="261.1" r="1.85"/><circle cx="786.2" cy="270.2" r="1.85"/><circle cx="787.0" cy="262.8" r="1.85"/><circle cx="788.1" cy="278.0" r="1.85"/><circle cx="789.2" cy="275.9" r="1.85"/><circle cx="790.2" cy="262.8" r="1.85"/><circle cx="791.3" cy="256.9" r="1.85"/><circle cx="792.3" cy="255.8" r="1.85"/><circle cx="793.2" cy="255.0" r="1.85"/><circle cx="794.2" cy="259.0" r="1.85"/><circle cx="795.3" cy="253.9" r="1.85"/><circle cx="796.1" cy="252.9" r="1.85"/><circle cx="797.2" cy="251.8" r="1.85"/><circle cx="798.2" cy="250.8" r="1.85"/><circle cx="799.3" cy="236.0" r="1.85"/><circle cx="800.3" cy="233.9" r="1.85"/><circle cx="801.2" cy="231.8" r="1.85"/><circle cx="802.2" cy="221.6" r="1.85"/><circle cx="803.3" cy="219.5" r="1.85"/><circle cx="804.1" cy="214.9" r="1.85"/><circle cx="805.2" cy="210.0" r="1.85"/><circle cx="806.2" cy="214.9" r="1.85"/><circle cx="807.3" cy="224.8" r="1.85"/><circle cx="808.4" cy="207.9" r="1.85"/><circle cx="809.2" cy="209.0" r="1.85"/><circle cx="810.3" cy="228.0" r="1.85"/><circle cx="811.3" cy="205.8" r="1.85"/><circle cx="812.4" cy="200.5" r="1.85"/><circle cx="813.4" cy="202.7" r="1.85"/><circle cx="814.3" cy="221.0" r="1.85"/><circle cx="815.3" cy="204.8" r="1.85"/><circle cx="816.4" cy="217.8" r="1.85"/><circle cx="817.4" cy="224.8" r="1.85"/><circle cx="818.3" cy="231.8" r="1.85"/><circle cx="819.3" cy="225.9" r="1.85"/><circle cx="820.4" cy="223.8" r="1.85"/><circle cx="821.4" cy="221.6" r="1.85"/><circle cx="822.5" cy="228.0" r="1.85"/><circle cx="823.5" cy="219.5" r="1.85"/><circle cx="825.2" cy="217.0" r="1.85"/><circle cx="760.2" cy="341.7" r="1.85"/><circle cx="749.1" cy="352.5" r="1.85"/><circle cx="759.0" cy="356.8" r="1.85"/><circle cx="758.0" cy="373.7" r="1.85"/><circle cx="750.9" cy="379.6" r="1.85"/><circle cx="751.9" cy="385.9" r="1.85"/><circle cx="757.0" cy="417.8" r="1.85"/><circle cx="752.9" cy="421.8" r="1.85"/><circle cx="754.1" cy="425.9" r="1.85"/><circle cx="756.0" cy="438.7" r="1.85"/><circle cx="755.0" cy="442.0" r="1.85"/></g><rect x="741" y="339" width="14" height="12" fill="#40BBEC"/>
<rect x="9" y="31" width="1" height="630" fill="#000"/>
<rect x="9" y="31" width="832" height="1" fill="#000"/>
<rect x="840" y="31" width="1" height="630" fill="#000"/>
<rect x="9" y="660" width="832" height="1" fill="#000"/>
<path d="M817.5 32H828.5L823 37.5Z" fill="#fff"/>
<g transform="translate(14,37)" fill="none" stroke-width="1" shape-rendering="geometricPrecision"><path d="M7.5 0.5H1.8Q0.5 0.5 0.5 1.8V9.2Q0.5 10.5 1.8 10.5H7.5" stroke="#B34A40" fill="#FFF3EE"/><path d="M7.5 0.5H13.2Q14.5 0.5 14.5 1.8V9.2Q14.5 10.5 13.2 10.5H7.5" stroke="#225A8C" fill="#E6F6FE"/><path d="M2 2.5H7M2 5.5H7M2 8.5H7" stroke="#C4502F"/><path d="M8 2.5H13M8 5.5H13M8 8.5H13" stroke="#1F5A8C"/></g>
<g transform="translate(35,37)" stroke-width="1" stroke-linejoin="round" shape-rendering="geometricPrecision"><path d="M0.5 1.3Q0.5 0.5 1.3 0.5H2.7Q3.5 0.5 3.5 1.3V4.5H5.7Q6.5 4.5 6.5 5.3V9.7Q6.5 10.5 5.7 10.5H1.3Q0.5 10.5 0.5 9.7Z" stroke="#B34A40" fill="#FDD6C7"/><path d="M14.5 1.3Q14.5 0.5 13.7 0.5H12.3Q11.5 0.5 11.5 1.3V4.5H9.3Q8.5 4.5 8.5 5.3V9.7Q8.5 10.5 9.3 10.5H13.7Q14.5 10.5 14.5 9.7Z" stroke="#225A8C" fill="#C2E8FC"/><rect x="5.5" y="1.3" width="4" height="1.4" rx="0.4" stroke="#9A9EA6" fill="#FFFFFF" stroke-width="0.8"/></g>
<text x="55.5" y="45.6" font-size="9.6" fill="#000" text-anchor="start" textLength="142.5" lengthAdjust="spacingAndGlyphs" stroke="#000" stroke-width="0.25">XAUUSD, M5:  Gold vs US Dollar</text>
<text x="14" y="60.4" font-size="9.6" fill="#000" text-anchor="start" textLength="38.5" lengthAdjust="spacingAndGlyphs" stroke="#000" stroke-width="0.25">4%: 1.33</text>
<rect x="841" y="51" width="3" height="1" fill="#000"/>
<text x="846.3" y="55" font-size="9.6" fill="#000" text-anchor="start" textLength="32" lengthAdjust="spacingAndGlyphs" stroke="#000" stroke-width="0.25">1934.57</text>
<rect x="841" y="83" width="3" height="1" fill="#000"/>
<text x="846.3" y="87" font-size="9.6" fill="#000" text-anchor="start" textLength="32" lengthAdjust="spacingAndGlyphs" stroke="#000" stroke-width="0.25">1932.87</text>
<rect x="841" y="115" width="3" height="1" fill="#000"/>
<text x="846.3" y="119" font-size="9.6" fill="#000" text-anchor="start" textLength="32" lengthAdjust="spacingAndGlyphs" stroke="#000" stroke-width="0.25">1931.17</text>
<rect x="841" y="147" width="3" height="1" fill="#000"/>
<text x="846.3" y="151" font-size="9.6" fill="#000" text-anchor="start" textLength="32" lengthAdjust="spacingAndGlyphs" stroke="#000" stroke-width="0.25">1929.47</text>
<rect x="841" y="179" width="3" height="1" fill="#000"/>
<text x="846.3" y="183" font-size="9.6" fill="#000" text-anchor="start" textLength="32" lengthAdjust="spacingAndGlyphs" stroke="#000" stroke-width="0.25">1927.77</text>
<rect x="841" y="211" width="3" height="1" fill="#000"/>
<text x="846.3" y="215" font-size="9.6" fill="#000" text-anchor="start" textLength="32" lengthAdjust="spacingAndGlyphs" stroke="#000" stroke-width="0.25">1926.07</text>
<rect x="841" y="243" width="3" height="1" fill="#000"/>
<text x="846.3" y="247" font-size="9.6" fill="#000" text-anchor="start" textLength="32" lengthAdjust="spacingAndGlyphs" stroke="#000" stroke-width="0.25">1924.37</text>
<rect x="841" y="275" width="3" height="1" fill="#000"/>
<text x="846.3" y="279" font-size="9.6" fill="#000" text-anchor="start" textLength="32" lengthAdjust="spacingAndGlyphs" stroke="#000" stroke-width="0.25">1922.67</text>
<rect x="841" y="307" width="3" height="1" fill="#000"/>
<text x="846.3" y="311" font-size="9.6" fill="#000" text-anchor="start" textLength="32" lengthAdjust="spacingAndGlyphs" stroke="#000" stroke-width="0.25">1920.97</text>
<rect x="841" y="339" width="3" height="1" fill="#000"/>
<text x="846.3" y="343" font-size="9.6" fill="#000" text-anchor="start" textLength="32" lengthAdjust="spacingAndGlyphs" stroke="#000" stroke-width="0.25">1919.27</text>
<rect x="841" y="371" width="3" height="1" fill="#000"/>
<text x="846.3" y="375" font-size="9.6" fill="#000" text-anchor="start" textLength="32" lengthAdjust="spacingAndGlyphs" stroke="#000" stroke-width="0.25">1917.57</text>
<rect x="841" y="404" width="3" height="1" fill="#000"/>
<text x="846.3" y="408" font-size="9.6" fill="#000" text-anchor="start" textLength="32" lengthAdjust="spacingAndGlyphs" stroke="#000" stroke-width="0.25">1915.87</text>
<rect x="841" y="436" width="3" height="1" fill="#000"/>
<text x="846.3" y="440" font-size="9.6" fill="#000" text-anchor="start" textLength="32" lengthAdjust="spacingAndGlyphs" stroke="#000" stroke-width="0.25">1914.17</text>
<rect x="841" y="468" width="3" height="1" fill="#000"/>
<text x="846.3" y="472" font-size="9.6" fill="#000" text-anchor="start" textLength="32" lengthAdjust="spacingAndGlyphs" stroke="#000" stroke-width="0.25">1912.47</text>
<rect x="841" y="500" width="3" height="1" fill="#000"/>
<text x="846.3" y="504" font-size="9.6" fill="#000" text-anchor="start" textLength="32" lengthAdjust="spacingAndGlyphs" stroke="#000" stroke-width="0.25">1910.77</text>
<rect x="841" y="532" width="3" height="1" fill="#000"/>
<text x="846.3" y="536" font-size="9.6" fill="#000" text-anchor="start" textLength="32" lengthAdjust="spacingAndGlyphs" stroke="#000" stroke-width="0.25">1909.07</text>
<rect x="841" y="564" width="3" height="1" fill="#000"/>
<text x="846.3" y="568" font-size="9.6" fill="#000" text-anchor="start" textLength="32" lengthAdjust="spacingAndGlyphs" stroke="#000" stroke-width="0.25">1907.37</text>
<rect x="841" y="596" width="3" height="1" fill="#000"/>
<text x="846.3" y="600" font-size="9.6" fill="#000" text-anchor="start" textLength="32" lengthAdjust="spacingAndGlyphs" stroke="#000" stroke-width="0.25">1905.67</text>
<rect x="841" y="628" width="3" height="1" fill="#000"/>
<text x="846.3" y="632" font-size="9.6" fill="#000" text-anchor="start" textLength="32" lengthAdjust="spacingAndGlyphs" stroke="#000" stroke-width="0.25">1903.97</text>
<rect x="843" y="212" width="39" height="11" fill="#DDA0DD"/>
<text x="846.3" y="221.4" font-size="9.6" fill="#fff" text-anchor="start" textLength="32" lengthAdjust="spacingAndGlyphs" stroke="#fff" stroke-width="0.25">1925.76</text>
<rect x="9" y="661" width="1" height="4" fill="#000"/>
<text x="8.9" y="672.5" font-size="9.6" fill="#000" text-anchor="start" textLength="41.2" lengthAdjust="spacingAndGlyphs" stroke="#000" stroke-width="0.25">5 Jul 2023</text>
<rect x="73" y="661" width="1" height="4" fill="#000"/>
<text x="72.9" y="672.5" font-size="9.6" fill="#000" text-anchor="start" textLength="44.2" lengthAdjust="spacingAndGlyphs" stroke="#000" stroke-width="0.25">6 Jul 04:55</text>
<rect x="137" y="661" width="1" height="4" fill="#000"/>
<text x="136.9" y="672.5" font-size="9.6" fill="#000" text-anchor="start" textLength="44.2" lengthAdjust="spacingAndGlyphs" stroke="#000" stroke-width="0.25">6 Jul 10:15</text>
<rect x="201" y="661" width="1" height="4" fill="#000"/>
<text x="200.9" y="672.5" font-size="9.6" fill="#000" text-anchor="start" textLength="44.2" lengthAdjust="spacingAndGlyphs" stroke="#000" stroke-width="0.25">6 Jul 15:35</text>
<rect x="265" y="661" width="1" height="4" fill="#000"/>
<text x="264.9" y="672.5" font-size="9.6" fill="#000" text-anchor="start" textLength="44.2" lengthAdjust="spacingAndGlyphs" stroke="#000" stroke-width="0.25">6 Jul 20:55</text>
<rect x="329" y="661" width="1" height="4" fill="#000"/>
<text x="328.9" y="672.5" font-size="9.6" fill="#000" text-anchor="start" textLength="44.2" lengthAdjust="spacingAndGlyphs" stroke="#000" stroke-width="0.25">7 Jul 03:20</text>
<rect x="393" y="661" width="1" height="4" fill="#000"/>
<text x="392.9" y="672.5" font-size="9.6" fill="#000" text-anchor="start" textLength="44.2" lengthAdjust="spacingAndGlyphs" stroke="#000" stroke-width="0.25">7 Jul 08:40</text>
<rect x="457" y="661" width="1" height="4" fill="#000"/>
<text x="456.9" y="672.5" font-size="9.6" fill="#000" text-anchor="start" textLength="44.2" lengthAdjust="spacingAndGlyphs" stroke="#000" stroke-width="0.25">7 Jul 14:00</text>
<rect x="521" y="661" width="1" height="4" fill="#000"/>
<text x="520.9" y="672.5" font-size="9.6" fill="#000" text-anchor="start" textLength="44.2" lengthAdjust="spacingAndGlyphs" stroke="#000" stroke-width="0.25">7 Jul 19:20</text>
<rect x="585" y="661" width="1" height="4" fill="#000"/>
<text x="584.9" y="672.5" font-size="9.6" fill="#000" text-anchor="start" textLength="49.2" lengthAdjust="spacingAndGlyphs" stroke="#000" stroke-width="0.25">10 Jul 01:45</text>
<rect x="649" y="661" width="1" height="4" fill="#000"/>
<text x="648.9" y="672.5" font-size="9.6" fill="#000" text-anchor="start" textLength="49.2" lengthAdjust="spacingAndGlyphs" stroke="#000" stroke-width="0.25">10 Jul 07:05</text>
<rect x="713" y="661" width="1" height="4" fill="#000"/>
<text x="712.9" y="672.5" font-size="9.6" fill="#000" text-anchor="start" textLength="49.2" lengthAdjust="spacingAndGlyphs" stroke="#000" stroke-width="0.25">10 Jul 12:25</text>
<rect x="777" y="661" width="1" height="4" fill="#000"/>
<text x="776.9" y="672.5" font-size="9.6" fill="#000" text-anchor="start" textLength="49.2" lengthAdjust="spacingAndGlyphs" stroke="#000" stroke-width="0.25">10 Jul 17:45</text>
</g>
<rect x="900" y="0" width="2" height="689" fill="#646464"/>
<rect x="0" y="688" width="902" height="1" fill="#696969"/>
<g id="win-m1">
<g transform="translate(913,5)" stroke="#22902F" fill="#CFF5D2" stroke-width="1" shape-rendering="geometricPrecision"><path d="M2.5 2V4.5M2.5 9.5V12M8.5 0V3.5M8.5 10.5V14" fill="none"/><rect x="0.5" y="4.5" width="4" height="5" rx="0.4"/><rect x="6.5" y="3.5" width="4" height="7" rx="0.4"/></g>
<text x="930" y="17.2" font-size="12" fill="#6D6D6D" text-anchor="start" textLength="64.2" lengthAdjust="spacingAndGlyphs">XAUUSD,M1</text>
<g stroke="#9A9A9A" stroke-width="1" fill="none"><path d="M1250 18.5H1259"/><rect x="1287.5" y="10.5" width="8" height="8"/><path d="M1323.5 10.5L1332 19M1332.5 10.5L1324 19" shape-rendering="geometricPrecision"/></g>
<rect x="907" y="27" width="430" height="408" fill="#FFFFFF"/>
<rect x="907" y="27" width="430" height="407" fill="#A0A0A0"/>
<rect x="908" y="28" width="430" height="406" fill="#E3E3E3"/>
<rect x="908" y="28" width="430" height="405" fill="#696969"/>
<rect x="909" y="29" width="430" height="404" fill="#E6E6FA"/>
</g>
<g id="chart-m1">
<rect x="912" y="46" width="380" height="1" fill="#FFFFFF"/>
<rect x="912" y="61" width="380" height="1" fill="#FFFFFF"/>
<rect x="912" y="77" width="380" height="1" fill="#FFFFFF"/>
<rect x="912" y="92" width="380" height="1" fill="#FFFFFF"/>
<rect x="912" y="107" width="380" height="1" fill="#FFFFFF"/>
<rect x="912" y="122" width="380" height="1" fill="#FFFFFF"/>
<rect x="912" y="138" width="380" height="1" fill="#FFFFFF"/>
<rect x="912" y="153" width="380" height="1" fill="#FFFFFF"/>
<rect x="912" y="168" width="380" height="1" fill="#FFFFFF"/>
<rect x="912" y="184" width="380" height="1" fill="#FFFFFF"/>
<rect x="912" y="199" width="380" height="1" fill="#FFFFFF"/>
<rect x="912" y="214" width="380" height="1" fill="#FFFFFF"/>
<rect x="912" y="229" width="380" height="1" fill="#FFFFFF"/>
<rect x="912" y="245" width="380" height="1" fill="#FFFFFF"/>
<rect x="912" y="260" width="380" height="1" fill="#FFFFFF"/>
<rect x="912" y="275" width="380" height="1" fill="#FFFFFF"/>
<rect x="912" y="290" width="380" height="1" fill="#FFFFFF"/>
<rect x="912" y="306" width="380" height="1" fill="#FFFFFF"/>
<rect x="912" y="321" width="380" height="1" fill="#FFFFFF"/>
<rect x="912" y="336" width="380" height="1" fill="#FFFFFF"/>
<rect x="912" y="351" width="380" height="1" fill="#FFFFFF"/>
<rect x="912" y="367" width="380" height="1" fill="#FFFFFF"/>
<rect x="912" y="382" width="380" height="1" fill="#FFFFFF"/>
<rect x="912" y="397" width="380" height="1" fill="#FFFFFF"/>
<rect x="912" y="71" width="380" height="1" fill="#E0A2D2"/>
<g fill="#C7BEEF" shape-rendering="geometricPrecision"><circle cx="964.1" cy="228.8" r="1.85"/><circle cx="962.0" cy="234.9" r="1.85"/><circle cx="960.9" cy="240.8" r="1.85"/><circle cx="963.4" cy="240.8" r="1.85"/><circle cx="960.1" cy="257.9" r="1.85"/><circle cx="958.0" cy="261.9" r="1.85"/><circle cx="959.0" cy="268.9" r="1.85"/><circle cx="912.4" cy="268.9" r="1.85"/><circle cx="953.9" cy="277.7" r="1.85"/><circle cx="956.9" cy="278.2" r="1.85"/><circle cx="955.8" cy="278.8" r="1.85"/><circle cx="953.1" cy="283.6" r="1.85"/><circle cx="955.0" cy="286.8" r="1.85"/><circle cx="951.0" cy="287.9" r="1.85"/><circle cx="916.0" cy="286.8" r="1.85"/><circle cx="913.9" cy="289.8" r="1.85"/><circle cx="918.1" cy="292.9" r="1.85"/><circle cx="917.0" cy="296.1" r="1.85"/><circle cx="918.9" cy="297.8" r="1.85"/><circle cx="923.1" cy="299.9" r="1.85"/><circle cx="914.9" cy="307.9" r="1.85"/><circle cx="920.0" cy="315.1" r="1.85"/><circle cx="951.8" cy="310.9" r="1.85"/><circle cx="949.9" cy="311.9" r="1.85"/><circle cx="921.0" cy="329.9" r="1.85"/><circle cx="924.0" cy="329.9" r="1.85"/><circle cx="922.1" cy="332.0" r="1.85"/><circle cx="925.0" cy="336.8" r="1.85"/><circle cx="926.1" cy="337.9" r="1.85"/><circle cx="944.0" cy="340.6" r="1.85"/><circle cx="948.0" cy="344.8" r="1.85"/><circle cx="932.0" cy="346.9" r="1.85"/><circle cx="927.2" cy="349.9" r="1.85"/><circle cx="947.0" cy="349.1" r="1.85"/><circle cx="933.1" cy="353.7" r="1.85"/><circle cx="929.1" cy="356.0" r="1.85"/><circle cx="949.1" cy="356.0" r="1.85"/><circle cx="936.0" cy="364.9" r="1.85"/><circle cx="945.1" cy="364.9" r="1.85"/><circle cx="946.1" cy="368.0" r="1.85"/><circle cx="940.0" cy="371.0" r="1.85"/><circle cx="943.0" cy="371.6" r="1.85"/><circle cx="941.9" cy="372.7" r="1.85"/><circle cx="930.9" cy="373.7" r="1.85"/><circle cx="935.0" cy="373.7" r="1.85"/><circle cx="938.1" cy="376.6" r="1.85"/><circle cx="934.0" cy="380.8" r="1.85"/><circle cx="939.2" cy="380.8" r="1.85"/><circle cx="941.2" cy="385.9" r="1.85"/><circle cx="937.1" cy="387.8" r="1.85"/><circle cx="930.1" cy="398.8" r="1.85"/><circle cx="963.9" cy="228.7" r="1.85"/><circle cx="965.0" cy="206.8" r="1.85"/><circle cx="966.0" cy="195.6" r="1.85"/><circle cx="967.9" cy="193.9" r="1.85"/><circle cx="966.9" cy="180.8" r="1.85"/><circle cx="969.0" cy="180.8" r="1.85"/><circle cx="970.0" cy="168.6" r="1.85"/><circle cx="971.1" cy="172.8" r="1.85"/><circle cx="971.9" cy="190.8" r="1.85"/><circle cx="973.0" cy="195.6" r="1.85"/><circle cx="974.1" cy="180.8" r="1.85"/><circle cx="974.9" cy="182.7" r="1.85"/><circle cx="975.9" cy="177.7" r="1.85"/><circle cx="977.0" cy="149.0" r="1.85"/><circle cx="977.0" cy="183.4" r="1.85"/><circle cx="978.1" cy="183.8" r="1.85"/><circle cx="979.1" cy="197.7" r="1.85"/><circle cx="980.0" cy="209.7" r="1.85"/><circle cx="981.0" cy="182.7" r="1.85"/><circle cx="982.1" cy="187.6" r="1.85"/><circle cx="983.1" cy="165.9" r="1.85"/><circle cx="984.0" cy="186.5" r="1.85"/><circle cx="985.0" cy="195.6" r="1.85"/><circle cx="986.1" cy="193.9" r="1.85"/><circle cx="987.1" cy="194.6" r="1.85"/><circle cx="988.0" cy="202.8" r="1.85"/><circle cx="989.0" cy="193.9" r="1.85"/><circle cx="990.1" cy="192.9" r="1.85"/><circle cx="991.1" cy="178.7" r="1.85"/><circle cx="992.0" cy="151.9" r="1.85"/><circle cx="993.0" cy="133.8" r="1.85"/><circle cx="994.1" cy="119.0" r="1.85"/><circle cx="994.9" cy="120.1" r="1.85"/><circle cx="996.0" cy="130.0" r="1.85"/><circle cx="997.0" cy="120.1" r="1.85"/><circle cx="998.1" cy="134.9" r="1.85"/><circle cx="998.9" cy="121.8" r="1.85"/><circle cx="1000.0" cy="103.8" r="1.85"/><circle cx="1001.1" cy="116.9" r="1.85"/><circle cx="1001.9" cy="123.9" r="1.85"/><circle cx="1003.0" cy="142.9" r="1.85"/><circle cx="1004.0" cy="145.4" r="1.85"/><circle cx="1005.1" cy="147.9" r="1.85"/><circle cx="1005.9" cy="141.2" r="1.85"/><circle cx="1007.0" cy="158.7" r="1.85"/><circle cx="1008.0" cy="140.8" r="1.85"/><circle cx="1009.1" cy="119.7" r="1.85"/><circle cx="1010.1" cy="154.9" r="1.85"/><circle cx="1011.0" cy="132.7" r="1.85"/><circle cx="1012.0" cy="118.0" r="1.85"/><circle cx="1013.1" cy="120.1" r="1.85"/><circle cx="1014.1" cy="101.7" r="1.85"/><circle cx="1015.0" cy="112.9" r="1.85"/><circle cx="1016.0" cy="100.0" r="1.85"/><circle cx="1017.1" cy="102.8" r="1.85"/><circle cx="1018.1" cy="105.7" r="1.85"/><circle cx="1017.5" cy="98.6" r="1.85"/><circle cx="1019.2" cy="99.0" r="1.85"/><circle cx="1021.1" cy="101.7" r="1.85"/><circle cx="1022.2" cy="116.9" r="1.85"/><circle cx="1023.0" cy="114.8" r="1.85"/><circle cx="1024.1" cy="152.8" r="1.85"/><circle cx="1025.1" cy="140.8" r="1.85"/><circle cx="1026.2" cy="154.9" r="1.85"/><circle cx="1027.2" cy="165.0" r="1.85"/><circle cx="1028.1" cy="165.9" r="1.85"/><circle cx="1029.1" cy="159.7" r="1.85"/><circle cx="1030.2" cy="147.9" r="1.85"/><circle cx="1031.2" cy="143.3" r="1.85"/><circle cx="1032.3" cy="146.9" r="1.85"/><circle cx="1033.3" cy="153.8" r="1.85"/><circle cx="1034.4" cy="154.9" r="1.85"/><circle cx="1035.2" cy="153.8" r="1.85"/><circle cx="1036.1" cy="138.6" r="1.85"/><circle cx="1037.1" cy="139.7" r="1.85"/><circle cx="1038.2" cy="141.8" r="1.85"/><circle cx="1039.2" cy="143.9" r="1.85"/><circle cx="1040.3" cy="161.9" r="1.85"/><circle cx="1041.1" cy="165.0" r="1.85"/><circle cx="1042.2" cy="171.1" r="1.85"/><circle cx="1043.0" cy="170.1" r="1.85"/><circle cx="1044.1" cy="183.4" r="1.85"/><circle cx="1045.1" cy="193.9" r="1.85"/><circle cx="1046.2" cy="183.4" r="1.85"/><circle cx="1047.3" cy="183.8" r="1.85"/><circle cx="1048.1" cy="177.7" r="1.85"/><circle cx="1049.2" cy="175.6" r="1.85"/><circle cx="1050.2" cy="198.8" r="1.85"/><circle cx="1051.3" cy="184.9" r="1.85"/><circle cx="1052.1" cy="187.6" r="1.85"/><circle cx="1053.2" cy="189.1" r="1.85"/><circle cx="1054.2" cy="179.8" r="1.85"/><circle cx="1055.3" cy="174.9" r="1.85"/><circle cx="1056.1" cy="166.9" r="1.85"/><circle cx="1057.2" cy="168.6" r="1.85"/><circle cx="1058.2" cy="178.7" r="1.85"/><circle cx="1059.3" cy="187.6" r="1.85"/><circle cx="1060.1" cy="183.8" r="1.85"/><circle cx="1061.2" cy="177.7" r="1.85"/><circle cx="1062.2" cy="162.9" r="1.85"/><circle cx="1063.1" cy="165.9" r="1.85"/><circle cx="1064.1" cy="150.7" r="1.85"/><circle cx="1065.2" cy="152.8" r="1.85"/><circle cx="1066.2" cy="139.7" r="1.85"/><circle cx="1067.3" cy="137.0" r="1.85"/><circle cx="1068.1" cy="130.8" r="1.85"/><circle cx="1069.2" cy="137.0" r="1.85"/><circle cx="1070.3" cy="149.6" r="1.85"/><circle cx="1071.1" cy="141.8" r="1.85"/><circle cx="1072.2" cy="162.9" r="1.85"/><circle cx="1073.2" cy="172.2" r="1.85"/><circle cx="1074.3" cy="168.6" r="1.85"/><circle cx="1075.3" cy="162.9" r="1.85"/><circle cx="1076.2" cy="164.0" r="1.85"/><circle cx="1077.2" cy="149.0" r="1.85"/><circle cx="1078.1" cy="159.7" r="1.85"/><circle cx="1079.1" cy="153.8" r="1.85"/><circle cx="1080.2" cy="154.9" r="1.85"/><circle cx="1081.2" cy="155.9" r="1.85"/><circle cx="1082.1" cy="149.6" r="1.85"/><circle cx="1083.1" cy="137.0" r="1.85"/><circle cx="1084.2" cy="157.0" r="1.85"/><circle cx="1085.2" cy="155.9" r="1.85"/><circle cx="1086.1" cy="143.9" r="1.85"/><circle cx="1087.1" cy="137.0" r="1.85"/><circle cx="1088.2" cy="130.8" r="1.85"/><circle cx="1089.2" cy="139.1" r="1.85"/><circle cx="1090.1" cy="145.4" r="1.85"/><circle cx="1091.1" cy="141.2" r="1.85"/><circle cx="1092.2" cy="143.9" r="1.85"/><circle cx="1093.2" cy="141.8" r="1.85"/><circle cx="1094.1" cy="154.9" r="1.85"/><circle cx="1095.1" cy="153.8" r="1.85"/><circle cx="1096.2" cy="152.8" r="1.85"/><circle cx="1097.3" cy="141.2" r="1.85"/><circle cx="1098.3" cy="134.9" r="1.85"/><circle cx="1099.4" cy="141.2" r="1.85"/><circle cx="1100.2" cy="134.4" r="1.85"/><circle cx="1101.3" cy="133.8" r="1.85"/><circle cx="1102.3" cy="153.8" r="1.85"/><circle cx="1103.2" cy="155.9" r="1.85"/><circle cx="1104.2" cy="153.8" r="1.85"/><circle cx="1105.3" cy="158.7" r="1.85"/><circle cx="1106.3" cy="157.0" r="1.85"/><circle cx="1107.2" cy="159.7" r="1.85"/><circle cx="1108.2" cy="150.7" r="1.85"/><circle cx="1109.3" cy="146.0" r="1.85"/><circle cx="1110.3" cy="143.3" r="1.85"/><circle cx="1111.2" cy="137.0" r="1.85"/><circle cx="1112.2" cy="130.8" r="1.85"/><circle cx="1113.3" cy="135.9" r="1.85"/><circle cx="1114.3" cy="133.8" r="1.85"/><circle cx="1115.2" cy="131.9" r="1.85"/><circle cx="1116.2" cy="132.7" r="1.85"/><circle cx="1117.3" cy="130.8" r="1.85"/><circle cx="1118.4" cy="123.9" r="1.85"/><circle cx="1119.4" cy="121.1" r="1.85"/><circle cx="1120.5" cy="119.7" r="1.85"/><circle cx="1121.3" cy="118.0" r="1.85"/><circle cx="1122.4" cy="116.9" r="1.85"/><circle cx="1123.4" cy="126.8" r="1.85"/><circle cx="1124.3" cy="130.0" r="1.85"/><circle cx="1125.3" cy="128.9" r="1.85"/><circle cx="1126.4" cy="130.8" r="1.85"/><circle cx="1127.4" cy="116.9" r="1.85"/><circle cx="1128.3" cy="121.8" r="1.85"/><circle cx="1129.3" cy="123.9" r="1.85"/><circle cx="1130.4" cy="131.9" r="1.85"/><circle cx="1131.4" cy="139.1" r="1.85"/><circle cx="1132.3" cy="130.0" r="1.85"/><circle cx="1133.3" cy="128.9" r="1.85"/><circle cx="1134.4" cy="141.2" r="1.85"/><circle cx="1135.4" cy="137.0" r="1.85"/><circle cx="1136.5" cy="131.9" r="1.85"/><circle cx="1137.3" cy="120.1" r="1.85"/><circle cx="1138.4" cy="119.7" r="1.85"/><circle cx="1139.5" cy="121.8" r="1.85"/><circle cx="1140.5" cy="119.7" r="1.85"/><circle cx="1141.6" cy="119.0" r="1.85"/><circle cx="1142.6" cy="118.6" r="1.85"/><circle cx="1144.5" cy="111.9" r="1.85"/><circle cx="1145.6" cy="118.0" r="1.85"/><circle cx="1146.6" cy="121.1" r="1.85"/><circle cx="1147.5" cy="123.2" r="1.85"/><circle cx="1148.5" cy="123.9" r="1.85"/><circle cx="1149.4" cy="110.6" r="1.85"/><circle cx="1151.0" cy="117.9" r="1.85"/><circle cx="1152.1" cy="111.1" r="1.85"/><circle cx="1152.9" cy="116.4" r="1.85"/><circle cx="1154.0" cy="109.0" r="1.85"/><circle cx="1155.0" cy="109.6" r="1.85"/><circle cx="1156.1" cy="106.9" r="1.85"/><circle cx="1156.9" cy="97.0" r="1.85"/><circle cx="1158.0" cy="98.5" r="1.85"/><circle cx="1159.1" cy="88.5" r="1.85"/><circle cx="1159.9" cy="93.2" r="1.85"/><circle cx="1160.9" cy="87.9" r="1.85"/><circle cx="1162.0" cy="93.8" r="1.85"/><circle cx="1163.1" cy="101.0" r="1.85"/><circle cx="1164.1" cy="99.9" r="1.85"/><circle cx="1165.0" cy="105.8" r="1.85"/><circle cx="1166.0" cy="102.0" r="1.85"/><circle cx="1167.1" cy="97.0" r="1.85"/><circle cx="1168.1" cy="90.0" r="1.85"/><circle cx="1169.0" cy="99.9" r="1.85"/><circle cx="1170.0" cy="89.4" r="1.85"/><circle cx="1172.1" cy="78.8" r="1.85"/><circle cx="1173.0" cy="77.4" r="1.85"/><circle cx="1174.0" cy="74.8" r="1.85"/><circle cx="1175.1" cy="78.8" r="1.85"/><circle cx="1176.1" cy="73.1" r="1.85"/><circle cx="1177.0" cy="70.6" r="1.85"/><circle cx="1178.0" cy="67.9" r="1.85"/><circle cx="1179.1" cy="73.8" r="1.85"/><circle cx="1179.9" cy="68.9" r="1.85"/><circle cx="1181.0" cy="75.2" r="1.85"/><circle cx="1182.0" cy="78.8" r="1.85"/><circle cx="1183.1" cy="74.8" r="1.85"/><circle cx="1183.9" cy="65.8" r="1.85"/><circle cx="1185.0" cy="64.7" r="1.85"/><circle cx="1186.1" cy="60.5" r="1.85"/><circle cx="1186.9" cy="55.2" r="1.85"/><circle cx="1188.0" cy="59.0" r="1.85"/><circle cx="1189.0" cy="56.9" r="1.85"/><circle cx="1190.1" cy="52.0" r="1.85"/><circle cx="1190.9" cy="58.4" r="1.85"/><circle cx="1192.0" cy="65.8" r="1.85"/><circle cx="1193.0" cy="67.9" r="1.85"/><circle cx="1194.1" cy="66.8" r="1.85"/><circle cx="1195.1" cy="73.8" r="1.85"/><circle cx="1196.0" cy="72.1" r="1.85"/><circle cx="1197.0" cy="74.2" r="1.85"/><circle cx="1198.1" cy="82.0" r="1.85"/><circle cx="1199.1" cy="80.5" r="1.85"/><circle cx="1200.0" cy="73.8" r="1.85"/><circle cx="1201.0" cy="72.1" r="1.85"/><circle cx="1202.1" cy="61.5" r="1.85"/><circle cx="1203.1" cy="57.7" r="1.85"/><circle cx="1204.0" cy="54.8" r="1.85"/><circle cx="1205.0" cy="56.9" r="1.85"/><circle cx="1206.1" cy="47.8" r="1.85"/><circle cx="1207.2" cy="66.8" r="1.85"/><circle cx="1208.0" cy="59.0" r="1.85"/><circle cx="1209.1" cy="59.8" r="1.85"/><circle cx="1210.1" cy="65.8" r="1.85"/><circle cx="1211.2" cy="68.9" r="1.85"/><circle cx="1212.2" cy="70.0" r="1.85"/><circle cx="1213.1" cy="85.8" r="1.85"/><circle cx="1214.1" cy="57.7" r="1.85"/><circle cx="1215.2" cy="58.4" r="1.85"/><circle cx="1216.2" cy="60.5" r="1.85"/><circle cx="1217.3" cy="56.9" r="1.85"/><circle cx="1218.1" cy="57.7" r="1.85"/><circle cx="1219.2" cy="55.2" r="1.85"/><circle cx="1220.2" cy="54.2" r="1.85"/><circle cx="1221.1" cy="59.0" r="1.85"/><circle cx="1222.1" cy="58.4" r="1.85"/><circle cx="1223.2" cy="51.0" r="1.85"/><circle cx="1224.2" cy="49.9" r="1.85"/><circle cx="1225.1" cy="47.8" r="1.85"/><circle cx="1226.1" cy="45.1" r="1.85"/><circle cx="1227.2" cy="46.3" r="1.85"/><circle cx="1228.0" cy="52.0" r="1.85"/><circle cx="1229.1" cy="50.6" r="1.85"/><circle cx="1230.1" cy="53.1" r="1.85"/><circle cx="1231.2" cy="56.9" r="1.85"/><circle cx="1232.0" cy="60.5" r="1.85"/><circle cx="1233.1" cy="75.9" r="1.85"/><circle cx="1234.2" cy="70.0" r="1.85"/><circle cx="1235.2" cy="63.6" r="1.85"/><circle cx="1236.3" cy="56.9" r="1.85"/><circle cx="1237.1" cy="53.1" r="1.85"/><circle cx="1238.2" cy="54.8" r="1.85"/><circle cx="1239.2" cy="61.5" r="1.85"/><circle cx="1240.3" cy="62.6" r="1.85"/><circle cx="1241.1" cy="65.8" r="1.85"/><circle cx="1242.2" cy="68.9" r="1.85"/><circle cx="1243.2" cy="70.6" r="1.85"/><circle cx="1244.3" cy="73.1" r="1.85"/><circle cx="1245.1" cy="73.8" r="1.85"/><circle cx="1246.2" cy="74.2" r="1.85"/><circle cx="1247.2" cy="82.0" r="1.85"/><circle cx="1248.3" cy="77.4" r="1.85"/><circle cx="1249.1" cy="82.8" r="1.85"/><circle cx="1250.2" cy="93.2" r="1.85"/><circle cx="1251.2" cy="92.1" r="1.85"/><circle cx="1252.3" cy="91.1" r="1.85"/><circle cx="1253.1" cy="84.7" r="1.85"/><circle cx="1254.2" cy="83.9" r="1.85"/><circle cx="1255.3" cy="76.7" r="1.85"/><circle cx="1256.3" cy="78.8" r="1.85"/><circle cx="1257.2" cy="80.9" r="1.85"/><circle cx="1258.2" cy="80.1" r="1.85"/><circle cx="1259.3" cy="77.4" r="1.85"/><circle cx="1260.3" cy="76.7" r="1.85"/><circle cx="1261.2" cy="82.8" r="1.85"/><circle cx="1262.2" cy="83.9" r="1.85"/><circle cx="1263.3" cy="84.7" r="1.85"/><circle cx="1264.1" cy="77.4" r="1.85"/><circle cx="1265.2" cy="76.7" r="1.85"/><circle cx="1266.2" cy="78.0" r="1.85"/><circle cx="1267.3" cy="77.4" r="1.85"/><circle cx="1268.1" cy="66.8" r="1.85"/><circle cx="1269.2" cy="67.9" r="1.85"/><circle cx="1270.2" cy="67.4" r="1.85"/><circle cx="1271.3" cy="67.9" r="1.85"/><circle cx="1272.1" cy="80.9" r="1.85"/><circle cx="1273.2" cy="80.1" r="1.85"/><circle cx="1274.2" cy="78.8" r="1.85"/><circle cx="1275.3" cy="74.2" r="1.85"/><circle cx="1276.1" cy="73.1" r="1.85"/><circle cx="1277.2" cy="89.4" r="1.85"/><circle cx="1278.2" cy="85.8" r="1.85"/><circle cx="1279.3" cy="80.1" r="1.85"/><circle cx="1280.1" cy="72.1" r="1.85"/><circle cx="1281.2" cy="66.8" r="1.85"/><circle cx="1282.3" cy="73.1" r="1.85"/><circle cx="1283.3" cy="72.1" r="1.85"/><circle cx="1284.4" cy="70.6" r="1.85"/></g>
<rect x="911" y="31" width="1" height="382" fill="#000"/>
<rect x="911" y="31" width="382" height="1" fill="#000"/>
<rect x="1292" y="31" width="1" height="382" fill="#000"/>
<rect x="911" y="412" width="382" height="1" fill="#000"/>
<path d="M1276.5 32H1287.5L1282 37.5Z" fill="#fff"/>
<g transform="translate(916,37)" fill="none" stroke-width="1" shape-rendering="geometricPrecision"><path d="M7.5 0.5H1.8Q0.5 0.5 0.5 1.8V9.2Q0.5 10.5 1.8 10.5H7.5" stroke="#B34A40" fill="#FFF3EE"/><path d="M7.5 0.5H13.2Q14.5 0.5 14.5 1.8V9.2Q14.5 10.5 13.2 10.5H7.5" stroke="#225A8C" fill="#E6F6FE"/><path d="M2 2.5H7M2 5.5H7M2 8.5H7" stroke="#C4502F"/><path d="M8 2.5H13M8 5.5H13M8 8.5H13" stroke="#1F5A8C"/></g>
<g transform="translate(937,37)" stroke-width="1" stroke-linejoin="round" shape-rendering="geometricPrecision"><path d="M0.5 1.3Q0.5 0.5 1.3 0.5H2.7Q3.5 0.5 3.5 1.3V4.5H5.7Q6.5 4.5 6.5 5.3V9.7Q6.5 10.5 5.7 10.5H1.3Q0.5 10.5 0.5 9.7Z" stroke="#B34A40" fill="#FDD6C7"/><path d="M14.5 1.3Q14.5 0.5 13.7 0.5H12.3Q11.5 0.5 11.5 1.3V4.5H9.3Q8.5 4.5 8.5 5.3V9.7Q8.5 10.5 9.3 10.5H13.7Q14.5 10.5 14.5 9.7Z" stroke="#225A8C" fill="#C2E8FC"/><rect x="5.5" y="1.3" width="4" height="1.4" rx="0.4" stroke="#9A9EA6" fill="#FFFFFF" stroke-width="0.8"/></g>
<text x="957.5" y="45.6" font-size="9.6" fill="#000" text-anchor="start" textLength="142.5" lengthAdjust="spacingAndGlyphs" stroke="#000" stroke-width="0.25">XAUUSD, M1:  Gold vs US Dollar</text>
<text x="916" y="60.4" font-size="9.6" fill="#000" text-anchor="start" textLength="33.5" lengthAdjust="spacingAndGlyphs" stroke="#000" stroke-width="0.25">4%: 0.6</text>
<rect x="1293" y="60" width="3" height="1" fill="#000"/>
<text x="1298.3" y="64" font-size="9.6" fill="#000" text-anchor="start" textLength="32" lengthAdjust="spacingAndGlyphs" stroke="#000" stroke-width="0.25">1926.20</text>
<rect x="1293" y="92" width="3" height="1" fill="#000"/>
<text x="1298.3" y="96" font-size="9.6" fill="#000" text-anchor="start" textLength="32" lengthAdjust="spacingAndGlyphs" stroke="#000" stroke-width="0.25">1924.95</text>
<rect x="1293" y="124" width="3" height="1" fill="#000"/>
<text x="1298.3" y="128" font-size="9.6" fill="#000" text-anchor="start" textLength="32" lengthAdjust="spacingAndGlyphs" stroke="#000" stroke-width="0.25">1923.70</text>
<rect x="1293" y="156" width="3" height="1" fill="#000"/>
<text x="1298.3" y="160" font-size="9.6" fill="#000" text-anchor="start" textLength="32" lengthAdjust="spacingAndGlyphs" stroke="#000" stroke-width="0.25">1922.45</text>
<rect x="1293" y="188" width="3" height="1" fill="#000"/>
<text x="1298.3" y="192" font-size="9.6" fill="#000" text-anchor="start" textLength="32" lengthAdjust="spacingAndGlyphs" stroke="#000" stroke-width="0.25">1921.20</text>
<rect x="1293" y="220" width="3" height="1" fill="#000"/>
<text x="1298.3" y="224" font-size="9.6" fill="#000" text-anchor="start" textLength="32" lengthAdjust="spacingAndGlyphs" stroke="#000" stroke-width="0.25">1919.95</text>
<rect x="1293" y="252" width="3" height="1" fill="#000"/>
<text x="1298.3" y="256" font-size="9.6" fill="#000" text-anchor="start" textLength="32" lengthAdjust="spacingAndGlyphs" stroke="#000" stroke-width="0.25">1918.70</text>
<rect x="1293" y="284" width="3" height="1" fill="#000"/>
<text x="1298.3" y="288" font-size="9.6" fill="#000" text-anchor="start" textLength="32" lengthAdjust="spacingAndGlyphs" stroke="#000" stroke-width="0.25">1917.45</text>
<rect x="1293" y="316" width="3" height="1" fill="#000"/>
<text x="1298.3" y="320" font-size="9.6" fill="#000" text-anchor="start" textLength="32" lengthAdjust="spacingAndGlyphs" stroke="#000" stroke-width="0.25">1916.20</text>
<rect x="1293" y="348" width="3" height="1" fill="#000"/>
<text x="1298.3" y="352" font-size="9.6" fill="#000" text-anchor="start" textLength="32" lengthAdjust="spacingAndGlyphs" stroke="#000" stroke-width="0.25">1914.95</text>
<rect x="1293" y="380" width="3" height="1" fill="#000"/>
<text x="1298.3" y="384" font-size="9.6" fill="#000" text-anchor="start" textLength="32" lengthAdjust="spacingAndGlyphs" stroke="#000" stroke-width="0.25">1913.70</text>
<rect x="1295" y="66" width="39" height="11" fill="#DDA0DD"/>
<text x="1298.3" y="75.4" font-size="9.6" fill="#fff" text-anchor="start" textLength="32" lengthAdjust="spacingAndGlyphs" stroke="#fff" stroke-width="0.25">1925.76</text>
<rect x="911" y="413" width="1" height="4" fill="#000"/>
<text x="910.9" y="424.5" font-size="9.6" fill="#000" text-anchor="start" textLength="46.2" lengthAdjust="spacingAndGlyphs" stroke="#000" stroke-width="0.25">10 Jul 2023</text>
<rect x="975" y="413" width="1" height="4" fill="#000"/>
<text x="974.9" y="424.5" font-size="9.6" fill="#000" text-anchor="start" textLength="49.2" lengthAdjust="spacingAndGlyphs" stroke="#000" stroke-width="0.25">10 Jul 16:32</text>
<rect x="1039" y="413" width="1" height="4" fill="#000"/>
<text x="1038.9" y="424.5" font-size="9.6" fill="#000" text-anchor="start" textLength="49.2" lengthAdjust="spacingAndGlyphs" stroke="#000" stroke-width="0.25">10 Jul 17:36</text>
<rect x="1103" y="413" width="1" height="4" fill="#000"/>
<text x="1102.9" y="424.5" font-size="9.6" fill="#000" text-anchor="start" textLength="49.2" lengthAdjust="spacingAndGlyphs" stroke="#000" stroke-width="0.25">10 Jul 18:40</text>
<rect x="1167" y="413" width="1" height="4" fill="#000"/>
<text x="1166.9" y="424.5" font-size="9.6" fill="#000" text-anchor="start" textLength="49.2" lengthAdjust="spacingAndGlyphs" stroke="#000" stroke-width="0.25">10 Jul 19:44</text>
<rect x="1231" y="413" width="1" height="4" fill="#000"/>
<text x="1230.9" y="424.5" font-size="9.6" fill="#000" text-anchor="start" textLength="49.2" lengthAdjust="spacingAndGlyphs" stroke="#000" stroke-width="0.25">10 Jul 20:48</text>
<rect x="908" y="248" width="15" height="12" fill="#40BBEC"/>
</g>
<g id="win-h1">
<rect x="902" y="440" width="433" height="1" fill="#646464"/>
<rect x="902" y="441" width="433" height="250" fill="#DFF0FC"/>
<g transform="translate(913,447)" stroke="#22902F" fill="#CFF5D2" stroke-width="1" shape-rendering="geometricPrecision"><path d="M2.5 2V4.5M2.5 9.5V12M8.5 0V3.5M8.5 10.5V14" fill="none"/><rect x="0.5" y="4.5" width="4" height="5" rx="0.4"/><rect x="6.5" y="3.5" width="4" height="7" rx="0.4"/></g>
<text x="930" y="458.6" font-size="12" fill="#1A1A1A" text-anchor="start" textLength="62" lengthAdjust="spacingAndGlyphs">XAUUSD,H1</text>
<g stroke="#000" stroke-width="1" fill="none"><path d="M1250 460.5H1259"/><rect x="1286.5" y="452.5" width="8" height="8"/><path d="M1321.5 452.5L1330 461M1330.5 452.5L1322 461" shape-rendering="geometricPrecision"/></g>
<rect x="907" y="469" width="430" height="230" fill="#A0A0A0"/>
<rect x="908" y="470" width="430" height="230" fill="#696969"/>
<rect x="909" y="471" width="430" height="230" fill="#E6E6FA"/>
</g>
<g id="chart-h1">
<rect x="912" y="481" width="379" height="1" fill="#FAF9FF"/>
<rect x="912" y="489" width="379" height="1" fill="#FAF9FF"/>
<rect x="912" y="497" width="379" height="1" fill="#FAF9FF"/>
<rect x="912" y="506" width="379" height="1" fill="#FAF9FF"/>
<rect x="912" y="514" width="379" height="1" fill="#FAF9FF"/>
<rect x="912" y="522" width="379" height="1" fill="#FAF9FF"/>
<rect x="912" y="530" width="379" height="1" fill="#FAF9FF"/>
<rect x="912" y="538" width="379" height="1" fill="#FAF9FF"/>
<rect x="912" y="546" width="379" height="1" fill="#FAF9FF"/>
<rect x="912" y="555" width="379" height="1" fill="#FAF9FF"/>
<rect x="912" y="563" width="379" height="1" fill="#FAF9FF"/>
<rect x="912" y="571" width="379" height="1" fill="#FAF9FF"/>
<rect x="912" y="579" width="379" height="1" fill="#FAF9FF"/>
<rect x="912" y="587" width="379" height="1" fill="#FAF9FF"/>
<rect x="912" y="595" width="379" height="1" fill="#FAF9FF"/>
<rect x="912" y="604" width="379" height="1" fill="#FAF9FF"/>
<rect x="912" y="612" width="379" height="1" fill="#FAF9FF"/>
<rect x="912" y="620" width="379" height="1" fill="#FAF9FF"/>
<rect x="912" y="628" width="379" height="1" fill="#FAF9FF"/>
<rect x="912" y="636" width="379" height="1" fill="#FAF9FF"/>
<rect x="912" y="644" width="379" height="1" fill="#FAF9FF"/>
<rect x="912" y="653" width="379" height="1" fill="#FAF9FF"/>
<rect x="912" y="661" width="379" height="1" fill="#FAF9FF"/>
<rect x="912" y="669" width="379" height="1" fill="#FAF9FF"/>
<rect x="912" y="590" width="379" height="1" fill="#E0A2D2"/>
<g fill="#C7BEEF" shape-rendering="geometricPrecision"><circle cx="914.0" cy="491" r="1.85"/><circle cx="926.8" cy="511.3" r="1.85"/><circle cx="926.8" cy="515.8" r="1.85"/><circle cx="930.2" cy="519.7" r="1.85"/><circle cx="934.1" cy="530.4" r="1.85"/><circle cx="938.1" cy="522.5" r="1.85"/><circle cx="938.1" cy="534.3" r="1.85"/><circle cx="942.6" cy="527.6" r="1.85"/><circle cx="942.6" cy="530.4" r="1.85"/><circle cx="945.9" cy="523.6" r="1.85"/><circle cx="945.9" cy="537.1" r="1.85"/><circle cx="949.9" cy="528.1" r="1.85"/><circle cx="954.2" cy="526.4" r="1.85"/><circle cx="958.2" cy="574.4" r="1.85"/><circle cx="962.2" cy="558.7" r="1.85"/><circle cx="962.2" cy="567.7" r="1.85"/><circle cx="966.7" cy="558.7" r="1.85"/><circle cx="970.1" cy="560.9" r="1.85"/><circle cx="970.1" cy="563.2" r="1.85"/><circle cx="977.9" cy="566.6" r="1.85"/><circle cx="982.1" cy="567.7" r="1.85"/><circle cx="982.1" cy="583.4" r="1.85"/><circle cx="986.2" cy="564.9" r="1.85"/><circle cx="990.1" cy="568.8" r="1.85"/><circle cx="993.7" cy="573.3" r="1.85"/><circle cx="998.0" cy="578.4" r="1.85"/><circle cx="998.0" cy="584.6" r="1.85"/><circle cx="1001.6" cy="581.2" r="1.85"/><circle cx="1001.6" cy="586.3" r="1.85"/><circle cx="1006.1" cy="594.1" r="1.85"/><circle cx="1006.1" cy="620.6" r="1.85"/><circle cx="1009.8" cy="612.1" r="1.85"/><circle cx="1009.8" cy="620.0" r="1.85"/><circle cx="1013.9" cy="615.0" r="1.85"/><circle cx="1013.9" cy="621.1" r="1.85"/><circle cx="1017.7" cy="628.0" r="1.85"/><circle cx="1022.4" cy="610.5" r="1.85"/><circle cx="1022.4" cy="620.0" r="1.85"/><circle cx="1026.3" cy="609.9" r="1.85"/><circle cx="1030.0" cy="607.1" r="1.85"/><circle cx="1038.1" cy="588.5" r="1.85"/><circle cx="1042.4" cy="586.8" r="1.85"/><circle cx="1042.4" cy="593.0" r="1.85"/><circle cx="1046.0" cy="575.6" r="1.85"/><circle cx="1046.0" cy="597.5" r="1.85"/><circle cx="1050.0" cy="573.3" r="1.85"/><circle cx="1053.9" cy="591.3" r="1.85"/><circle cx="1061.8" cy="581.2" r="1.85"/><circle cx="1061.8" cy="598.6" r="1.85"/><circle cx="1066.3" cy="581.4" r="1.85"/><circle cx="1070.2" cy="582.9" r="1.85"/><circle cx="1078.0" cy="616.3" r="1.85"/><circle cx="1082.3" cy="615.7" r="1.85"/><circle cx="1082.3" cy="621.3" r="1.85"/><circle cx="1086.2" cy="612.3" r="1.85"/><circle cx="1090.1" cy="615.7" r="1.85"/><circle cx="1094.1" cy="627.5" r="1.85"/><circle cx="1094.1" cy="636.5" r="1.85"/><circle cx="1098.6" cy="626.4" r="1.85"/><circle cx="1098.6" cy="635.9" r="1.85"/><circle cx="1101.9" cy="622.4" r="1.85"/><circle cx="1101.9" cy="629.8" r="1.85"/><circle cx="1105.9" cy="629.2" r="1.85"/><circle cx="1109.8" cy="629.8" r="1.85"/><circle cx="1109.8" cy="642.1" r="1.85"/><circle cx="1114.3" cy="642.1" r="1.85"/><circle cx="1118.0" cy="628.6" r="1.85"/><circle cx="1118.0" cy="663.5" r="1.85"/><circle cx="1122.2" cy="626.4" r="1.85"/><circle cx="1126.1" cy="632.6" r="1.85"/><circle cx="1126.1" cy="636.5" r="1.85"/><circle cx="1129.5" cy="632.9" r="1.85"/><circle cx="1134.0" cy="633.1" r="1.85"/><circle cx="1134.0" cy="635.4" r="1.85"/><circle cx="1138.3" cy="649.4" r="1.85"/><circle cx="1146.1" cy="604.3" r="1.85"/><circle cx="1150.0" cy="604.8" r="1.85"/><circle cx="1150.0" cy="607.1" r="1.85"/><circle cx="1154.3" cy="607.1" r="1.85"/><circle cx="1158.4" cy="603.7" r="1.85"/><circle cx="1158.4" cy="616.6" r="1.85"/><circle cx="1166.3" cy="622.8" r="1.85"/><circle cx="1170.0" cy="587.4" r="1.85"/><circle cx="1178.7" cy="596.9" r="1.85"/><circle cx="1178.7" cy="602.0" r="1.85"/><circle cx="1182.1" cy="584.0" r="1.85"/><circle cx="1182.1" cy="596.9" r="1.85"/><circle cx="1186.0" cy="580.6" r="1.85"/><circle cx="1189.4" cy="586.8" r="1.85"/><circle cx="1193.9" cy="589.1" r="1.85"/><circle cx="1193.9" cy="594.7" r="1.85"/><circle cx="1197.3" cy="589.3" r="1.85"/><circle cx="1197.3" cy="591.3" r="1.85"/><circle cx="1202.3" cy="590.2" r="1.85"/><circle cx="1206.3" cy="586.8" r="1.85"/><circle cx="1209.9" cy="581.2" r="1.85"/><circle cx="1214.1" cy="595.8" r="1.85"/><circle cx="1218.1" cy="612.1" r="1.85"/><circle cx="1218.1" cy="617.8" r="1.85"/><circle cx="1222.6" cy="612.1" r="1.85"/><circle cx="1226.5" cy="603.1" r="1.85"/><circle cx="1230.5" cy="586.6" r="1.85"/><circle cx="1230.5" cy="611.0" r="1.85"/><circle cx="1233.8" cy="624.5" r="1.85"/><circle cx="1233.8" cy="638.6" r="1.85"/><circle cx="1237.2" cy="627.3" r="1.85"/><circle cx="1237.2" cy="629.6" r="1.85"/><circle cx="1242.8" cy="625.1" r="1.85"/><circle cx="1246.8" cy="622.3" r="1.85"/><circle cx="1250.4" cy="614.4" r="1.85"/><circle cx="1250.4" cy="622.3" r="1.85"/><circle cx="1253.9" cy="606.5" r="1.85"/><circle cx="1258.0" cy="596.4" r="1.85"/><circle cx="1265.9" cy="589.1" r="1.85"/><circle cx="1265.9" cy="593.6" r="1.85"/><circle cx="1270.4" cy="591.3" r="1.85"/><circle cx="1274.1" cy="596.9" r="1.85"/><circle cx="1277.9" cy="592.4" r="1.85"/><circle cx="1281.7" cy="599.5" r="1.85"/></g><path fill="#800080" d="M912 491h2v11h-2zM912 500h5v2h-5zM916 503h2v14h-2zM916 506h6v2h-6zM920 507h2v10h-2zM920 510h7v2h-7zM925 511h2v5h-2zM925 514h5v2h-5zM928 513h2v7h-2zM928 518h6v2h-6zM932 514h2v16h-2zM932 529h6v2h-6zM936 522h2v12h-2zM936 522h4v2h-4zM939 529h7v2h-7zM941 528h2v2h-2zM944 524h2v13h-2zM944 536h5v2h-5zM948 528h2v4h-2zM948 531h5v2h-5zM952 517h2v9h-2zM952 522h5v2h-5zM956 525h2v49h-2zM956 573h5v2h-5zM960 559h2v9h-2zM960 558h7v2h-7zM965 559h2v6h-2zM965 560h8v2h-8zM968 561h2v2h-2zM971 561h2v6h-2zM971 566h7v2h-7zM976 567h2v4h-2zM976 567h6v2h-6zM980 568h2v15h-2zM981 573h5v2h-5zM984 565h2v9h-2zM984 564h5v2h-5zM988 569h5v2h-5zM988 569h2v4h-2zM991 571h5v2h-5zM992 571h2v2h-2zM996 578h2v7h-2zM996 577h5v2h-5zM1000 581h2v5h-2zM1000 585h5v2h-5zM1004 594h2v27h-2zM1004 619h6v2h-6zM1008 612h2v8h-2zM1008 614h6v2h-6zM1012 615h2v6h-2zM1012 620h6v2h-6zM1016 613h2v15h-2zM1016 612h6v2h-6zM1020 610h2v10h-2zM1020 609h6v2h-6zM1024 582h2v28h-2zM1024 581h5v2h-5zM1028 573h2v34h-2zM1028 606h6v2h-6zM1032 601h2v6h-2zM1032 600h4v2h-4zM1036 588h2v4h-2zM1036 588h7v2h-7zM1040 587h2v6h-2zM1040 586h6v2h-6zM1044 576h2v22h-2zM1044 580h6v2h-6zM1048 573h2v19h-2zM1048 590h6v2h-6zM1052 591h2v5h-2zM1052 593h6v2h-6zM1056 593h2v5h-2zM1056 592h6v2h-6zM1060 581h2v18h-2zM1060 580h6v2h-6zM1064 581h2v10h-2zM1064 582h6v2h-6zM1068 583h2v12h-2zM1068 593h6v2h-6zM1072 588h2v24h-2zM1072 610h5v2h-5zM1076 616h2v8h-2zM1076 615h14v2h-14zM1080 616h2v5h-2zM1084 612h2v4h-2zM1088 616h2v12h-2zM1088 625h5v2h-5zM1092 628h2v8h-2zM1092 635h7v2h-7zM1097 626h2v10h-2zM1097 625h5v2h-5zM1100 622h2v8h-2zM1100 628h6v2h-6zM1104 629h2v8h-2zM1104 629h6v2h-6zM1108 630h2v12h-2zM1108 641h6v2h-6zM1112 635h2v7h-2zM1112 637h6v2h-6zM1116 629h2v35h-2zM1116 662h5v2h-5zM1120 626h2v28h-2zM1120 626h5v2h-5zM1124 633h2v3h-2zM1124 632h8v2h-8zM1128 633h2v2h-2zM1130 634h8v2h-8zM1132 633h2v2h-2zM1136 635h2v14h-2zM1136 640h6v2h-6zM1140 624h2v18h-2zM1140 623h5v2h-5zM1144 604h2v12h-2zM1144 604h8v2h-8zM1148 605h2v2h-2zM1150 606h4v2h-4zM1152 607h2v10h-2zM1152 616h8v2h-8zM1156 604h2v13h-2zM1156 603h4v2h-4zM1160 619h2v5h-2zM1160 618h5v2h-5zM1164 578h2v45h-2zM1164 578h5v2h-5zM1168 587h2v15h-2zM1168 601h11v2h-11zM1177 597h2v5h-2zM1177 596h5v2h-5zM1180 584h2v13h-2zM1180 583h6v2h-6zM1184 581h2v3h-2zM1184 582h5v2h-5zM1187 583h2v4h-2zM1187 585h6v2h-6zM1192 589h2v6h-2zM1192 588h7v2h-7zM1195 589h2v2h-2zM1197 589h2v5h-2zM1197 592h5v2h-5zM1200 590h2v10h-2zM1200 598h5v2h-5zM1204 583h2v4h-2zM1204 582h6v2h-6zM1208 581h2v15h-2zM1208 595h6v2h-6zM1212 596h2v18h-2zM1212 613h7v2h-7zM1216 612h2v6h-2zM1216 611h7v2h-7zM1221 605h2v7h-2zM1221 608h5v2h-5zM1224 603h2v7h-2zM1224 609h6v2h-6zM1228 587h2v24h-2zM1228 586h5v2h-5zM1232 624h2v15h-2zM1232 624h5v2h-5zM1235 627h2v3h-2zM1235 627h8v2h-8zM1241 625h2v3h-2zM1241 624h6v2h-6zM1245 622h2v5h-2zM1245 622h6v2h-6zM1248 614h2v8h-2zM1248 614h6v2h-6zM1252 608h2v7h-2zM1252 606h4v2h-4zM1252 606h2v3h-2zM1256 570h2v26h-2zM1256 585h6v2h-6zM1260 586h2v7h-2zM1260 588h6v2h-6zM1264 589h2v5h-2zM1264 590h6v2h-6zM1268 591h2v13h-2zM1268 603h5v2h-5zM1272 592h2v5h-2zM1272 595h6v2h-6zM1276 592h2v27h-2zM1276 595h6v2h-6zM1280 590h2v10h-2zM1280 589h4v2h-4z"/>
<rect x="911" y="473" width="1" height="205" fill="#000"/>
<rect x="911" y="473" width="381" height="1" fill="#000"/>
<rect x="1291" y="473" width="1" height="205" fill="#000"/>
<rect x="911" y="677" width="381" height="1" fill="#000"/>
<path d="M1277.5 474H1288.5L1283 479.5Z" fill="#fff"/>
<g transform="translate(916,479)" fill="none" stroke-width="1" shape-rendering="geometricPrecision"><path d="M7.5 0.5H1.8Q0.5 0.5 0.5 1.8V9.2Q0.5 10.5 1.8 10.5H7.5" stroke="#B34A40" fill="#FFF3EE"/><path d="M7.5 0.5H13.2Q14.5 0.5 14.5 1.8V9.2Q14.5 10.5 13.2 10.5H7.5" stroke="#225A8C" fill="#E6F6FE"/><path d="M2 2.5H7M2 5.5H7M2 8.5H7" stroke="#C4502F"/><path d="M8 2.5H13M8 5.5H13M8 8.5H13" stroke="#1F5A8C"/></g>
<g transform="translate(937,479)" stroke-width="1" stroke-linejoin="round" shape-rendering="geometricPrecision"><path d="M0.5 1.3Q0.5 0.5 1.3 0.5H2.7Q3.5 0.5 3.5 1.3V4.5H5.7Q6.5 4.5 6.5 5.3V9.7Q6.5 10.5 5.7 10.5H1.3Q0.5 10.5 0.5 9.7Z" stroke="#B34A40" fill="#FDD6C7"/><path d="M14.5 1.3Q14.5 0.5 13.7 0.5H12.3Q11.5 0.5 11.5 1.3V4.5H9.3Q8.5 4.5 8.5 5.3V9.7Q8.5 10.5 9.3 10.5H13.7Q14.5 10.5 14.5 9.7Z" stroke="#225A8C" fill="#C2E8FC"/><rect x="5.5" y="1.3" width="4" height="1.4" rx="0.4" stroke="#9A9EA6" fill="#FFFFFF" stroke-width="0.8"/></g>
<text x="957.5" y="487.6" font-size="9.6" fill="#000" text-anchor="start" textLength="142.5" lengthAdjust="spacingAndGlyphs" stroke="#000" stroke-width="0.25">XAUUSD, H1:  Gold vs US Dollar</text>
<text x="916" y="502.4" font-size="9.6" fill="#000" text-anchor="start" textLength="38.5" lengthAdjust="spacingAndGlyphs" stroke="#000" stroke-width="0.25">4%: 3.29</text>
<rect x="1292" y="485" width="3" height="1" fill="#000"/>
<text x="1297.3" y="489" font-size="9.6" fill="#000" text-anchor="start" textLength="32" lengthAdjust="spacingAndGlyphs" stroke="#000" stroke-width="0.25">1967.99</text>
<rect x="1292" y="517" width="3" height="1" fill="#000"/>
<text x="1297.3" y="521" font-size="9.6" fill="#000" text-anchor="start" textLength="32" lengthAdjust="spacingAndGlyphs" stroke="#000" stroke-width="0.25">1955.08</text>
<rect x="1292" y="549" width="3" height="1" fill="#000"/>
<text x="1297.3" y="553" font-size="9.6" fill="#000" text-anchor="start" textLength="32" lengthAdjust="spacingAndGlyphs" stroke="#000" stroke-width="0.25">1942.17</text>
<rect x="1292" y="581" width="3" height="1" fill="#000"/>
<text x="1297.3" y="585" font-size="9.6" fill="#000" text-anchor="start" textLength="32" lengthAdjust="spacingAndGlyphs" stroke="#000" stroke-width="0.25">1929.26</text>
<rect x="1292" y="613" width="3" height="1" fill="#000"/>
<text x="1297.3" y="617" font-size="9.6" fill="#000" text-anchor="start" textLength="32" lengthAdjust="spacingAndGlyphs" stroke="#000" stroke-width="0.25">1916.35</text>
<rect x="1292" y="645" width="3" height="1" fill="#000"/>
<text x="1297.3" y="649" font-size="9.6" fill="#000" text-anchor="start" textLength="32" lengthAdjust="spacingAndGlyphs" stroke="#000" stroke-width="0.25">1903.44</text>
<rect x="1294" y="585" width="39" height="11" fill="#DDA0DD"/>
<text x="1297.3" y="594.4" font-size="9.6" fill="#fff" text-anchor="start" textLength="32" lengthAdjust="spacingAndGlyphs" stroke="#fff" stroke-width="0.25">1925.76</text>
<rect x="911" y="678" width="1" height="4" fill="#000"/>
<text x="910.9" y="689.5" font-size="9.6" fill="#000" text-anchor="start" textLength="48.0" lengthAdjust="spacingAndGlyphs" stroke="#000" stroke-width="0.25">16 Jun 2023</text>
<rect x="975" y="678" width="1" height="4" fill="#000"/>
<text x="974.9" y="689.5" font-size="9.6" fill="#000" text-anchor="start" textLength="51.800000000000004" lengthAdjust="spacingAndGlyphs" stroke="#000" stroke-width="0.25">21 Jun 09:00</text>
<rect x="1039" y="678" width="1" height="4" fill="#000"/>
<text x="1038.9" y="689.5" font-size="9.6" fill="#000" text-anchor="start" textLength="52.0" lengthAdjust="spacingAndGlyphs" stroke="#000" stroke-width="0.25">26 Jun 04:00</text>
<rect x="1103" y="678" width="1" height="4" fill="#000"/>
<text x="1102.9" y="689.5" font-size="9.6" fill="#000" text-anchor="start" textLength="52.0" lengthAdjust="spacingAndGlyphs" stroke="#000" stroke-width="0.25">28 Jun 22:00</text>
<rect x="1167" y="678" width="1" height="4" fill="#000"/>
<text x="1166.9" y="689.5" font-size="9.6" fill="#000" text-anchor="start" textLength="44.2" lengthAdjust="spacingAndGlyphs" stroke="#000" stroke-width="0.25">3 Jul 17:00</text>
<rect x="1231" y="678" width="1" height="4" fill="#000"/>
<text x="1230.9" y="689.5" font-size="9.6" fill="#000" text-anchor="start" textLength="44.2" lengthAdjust="spacingAndGlyphs" stroke="#000" stroke-width="0.25">6 Jul 14:00</text>
</g>
<g id="tabs">
<rect x="0" y="689" width="1335" height="2" fill="#FAFAFA"/>
<rect x="0" y="691" width="1335" height="20" fill="#F0F0F0"/>
<rect x="0" y="691" width="1335" height="1" fill="#000"/>
<rect x="179" y="691" width="85" height="19" fill="#000"/>
<rect x="180" y="689" width="82" height="19" fill="#FFFFFF"/>
<text x="12" y="705.6" font-size="12" fill="#7A7A7A" text-anchor="start" textLength="64.2" lengthAdjust="spacingAndGlyphs">XAUUSD,M1</text>
<rect x="89" y="694" width="1" height="14" fill="#8A8A8A"/>
<text x="101" y="705.6" font-size="12" fill="#7A7A7A" text-anchor="start" textLength="65" lengthAdjust="spacingAndGlyphs">XAUUSD,M5</text>
<text x="189" y="705.6" font-size="12" fill="#1A1A1A" text-anchor="start" textLength="62.5" lengthAdjust="spacingAndGlyphs">XAUUSD,H1</text>
<path d="M1301 701.5L1304.3 698.4V704.6ZM1325 701.5L1321.7 698.4V704.6Z" fill="#C8C8C8" shape-rendering="geometricPrecision"/>
</g>
</svg></body></html>
